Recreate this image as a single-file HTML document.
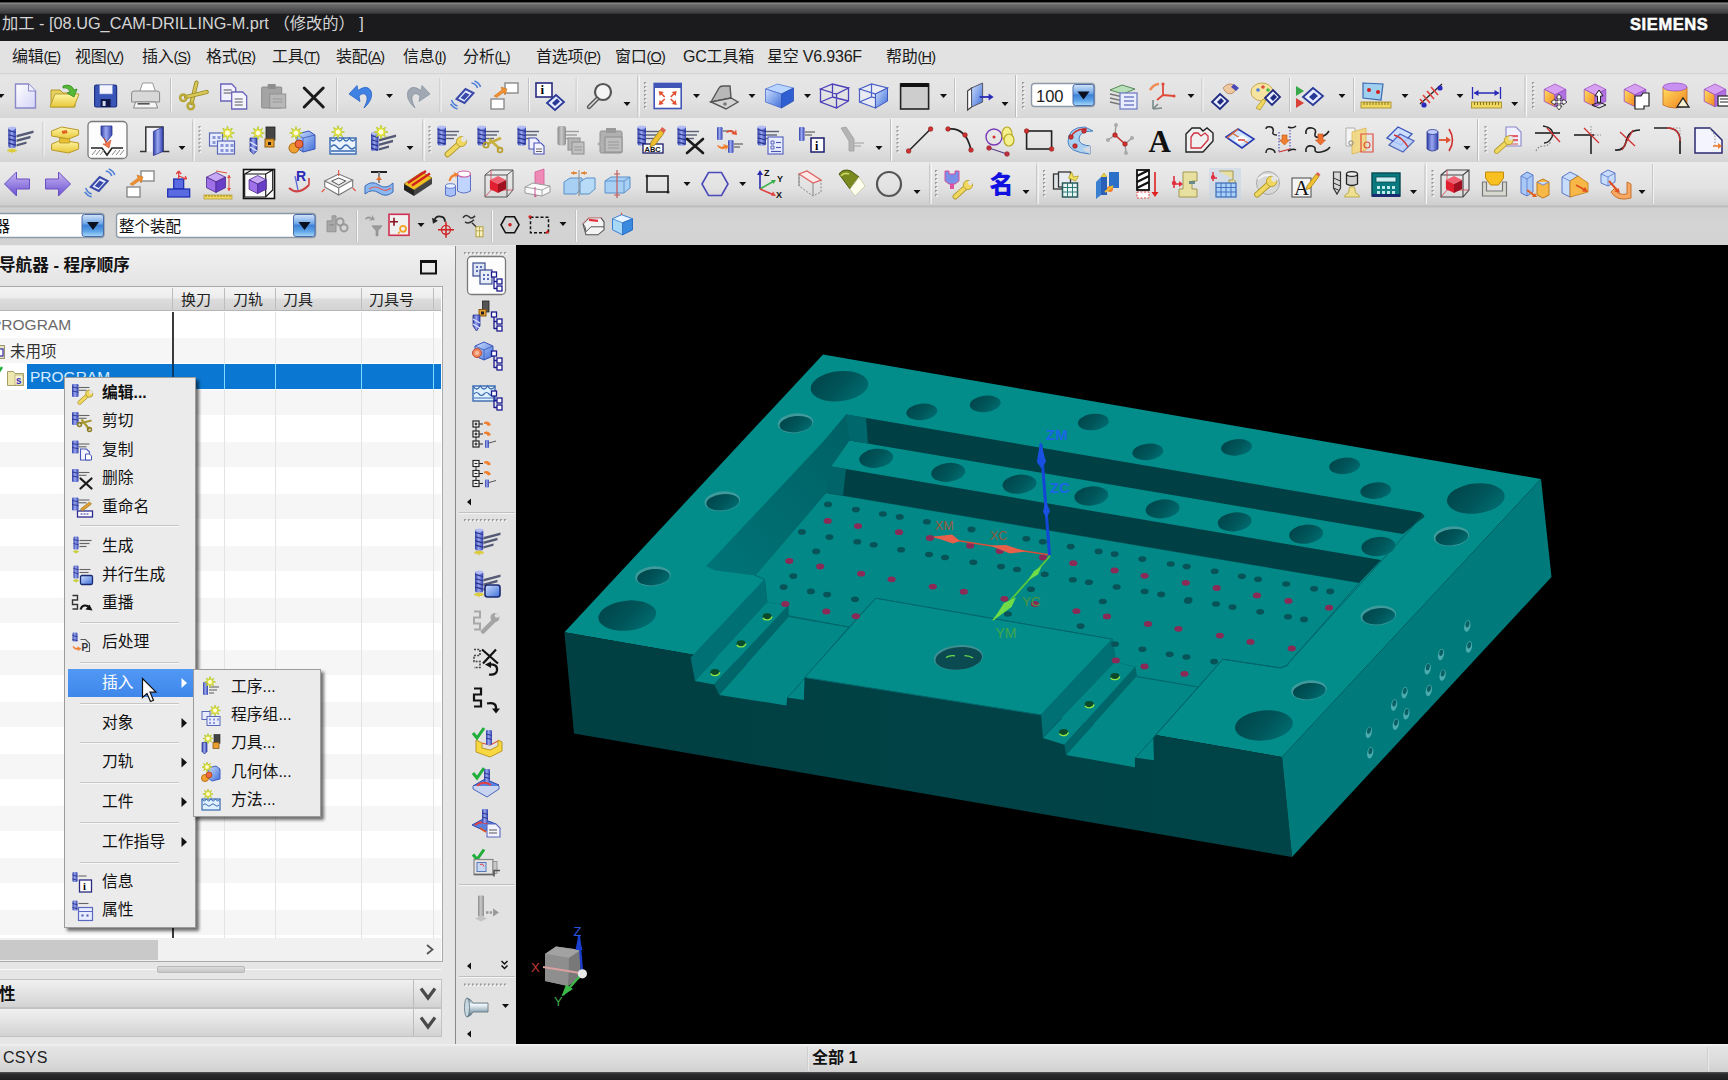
<!DOCTYPE html>
<html lang="zh-CN">
<head>
<meta charset="utf-8">
<title>NX 加工</title>
<style>
html,body{margin:0;padding:0;}
body{width:1728px;height:1080px;overflow:hidden;position:relative;background:#000;font-family:"Liberation Sans","Noto Sans CJK SC",sans-serif;font-size:16px;color:#111;}
.abs{position:absolute;}
div,span,svg{box-sizing:border-box;}
.t{position:absolute;white-space:nowrap;line-height:1;}
#topgrad{left:0;top:0;width:1728px;height:14px;background:linear-gradient(#000 0,#000 2px,#9a9a9a 3px,#6e6e6e 4px,#5a5a5c 8px,#3c3c3e 13px,#2a2a2c 14px);}
#title{left:0;top:14px;width:1728px;height:27px;background:#1b1b1e;}
#menubar{left:0;top:41px;width:1728px;height:32px;background:#e2e2e2;}
#tb1{left:0;top:73px;width:1728px;height:45px;background:linear-gradient(#cfcfcf 0,#e6e6e6 2px,#e2e2e2 60%,#d6d6d6 100%);}
#tb2{left:0;top:118px;width:1728px;height:44px;background:linear-gradient(#ebebeb 0,#e4e4e4 60%,#d4d4d4 100%);}
#tb3{left:0;top:162px;width:1728px;height:43px;background:linear-gradient(#ebebeb 0,#e2e2e2 60%,#cfcfcf 100%);}
#tb4{left:0;top:205px;width:1728px;height:40px;background:linear-gradient(#c8c8c8 0,#bcbcbc 1.5px,#d0d0d0 3px,#d4d4d4 50%,#d2d2d2 100%);}
#tb4line{left:0;top:245px;width:1728px;height:1px;background:#e8e8e8;}
.mi{position:absolute;top:48px;font-size:16px;line-height:18px;white-space:nowrap;color:#1a1a1a;letter-spacing:-0.2px;}
.mi u{text-decoration-thickness:1px;text-underline-offset:1px;}
.la{font-size:14.5px;letter-spacing:-0.9px;}
</style>
</head>
<body>
<div id="topgrad" class="abs"></div>
<div id="title" class="abs"></div>
<div class="t" style="left:2px;top:14px;font-size:16.3px;color:#d4d4d4;line-height:18px;">加工 - [08.UG_CAM-DRILLING-M.prt （修改的） ]</div>
<div class="t" style="left:1630px;top:14.5px;font-size:16.5px;font-weight:bold;color:#fff;line-height:18px;letter-spacing:0.6px;-webkit-text-stroke:0.5px #fff;">SIEMENS</div>
<div id="menubar" class="abs"></div>
<span class="mi" style="left:12px">编辑<span class="la">(<u>E</u>)</span></span>
<span class="mi" style="left:75px">视图<span class="la">(<u>V</u>)</span></span>
<span class="mi" style="left:142px">插入<span class="la">(<u>S</u>)</span></span>
<span class="mi" style="left:206px">格式<span class="la">(<u>R</u>)</span></span>
<span class="mi" style="left:272px">工具<span class="la">(<u>T</u>)</span></span>
<span class="mi" style="left:336px">装配<span class="la">(<u>A</u>)</span></span>
<span class="mi" style="left:403px">信息<span class="la">(<u>I</u>)</span></span>
<span class="mi" style="left:463px">分析<span class="la">(<u>L</u>)</span></span>
<span class="mi" style="left:536px">首选项<span class="la">(<u>P</u>)</span></span>
<span class="mi" style="left:615px">窗口<span class="la">(<u>O</u>)</span></span>
<span class="mi" style="left:683px">GC工具箱</span>
<span class="mi" style="left:767px">星空 V6.936F</span>
<span class="mi" style="left:886px">帮助<span class="la">(<u>H</u>)</span></span>
<div id="tb1" class="abs"></div>
<div id="tb2" class="abs"></div>
<div id="tb3" class="abs"></div>
<div id="tb4" class="abs"></div>
<div id="tb4line" class="abs"></div>
<svg class="abs" style="left:0;top:0" width="1728" height="250" viewBox="0 0 1728 250">
<defs>
<linearGradient id="gdr" x1="0" y1="0" x2="1" y2="0"><stop offset="0" stop-color="#2f3ea8"/><stop offset="0.45" stop-color="#9aa8f0"/><stop offset="1" stop-color="#3443b0"/></linearGradient>
<linearGradient id="gdg" x1="0" y1="0" x2="1" y2="0"><stop offset="0" stop-color="#8a8a8a"/><stop offset="0.45" stop-color="#c8c8c8"/><stop offset="1" stop-color="#8e8e8e"/></linearGradient>
<linearGradient id="gbl" x1="0" y1="0" x2="1" y2="1"><stop offset="0" stop-color="#cfe0ff"/><stop offset="1" stop-color="#3f6fd8"/></linearGradient>
<linearGradient id="gpu" x1="0" y1="0" x2="0" y2="1"><stop offset="0" stop-color="#c9b8f4"/><stop offset="1" stop-color="#6a4fd0"/></linearGradient>
<linearGradient id="gor" x1="0" y1="0" x2="1" y2="1"><stop offset="0" stop-color="#ffe060"/><stop offset="1" stop-color="#f08020"/></linearGradient>
<linearGradient id="gye" x1="0" y1="0" x2="0" y2="1"><stop offset="0" stop-color="#fff6a8"/><stop offset="1" stop-color="#e8c838"/></linearGradient>
<linearGradient id="gcb" x1="0" y1="0" x2="0" y2="1"><stop offset="0" stop-color="#d4e4f8"/><stop offset="0.4" stop-color="#74aae8"/><stop offset="0.5" stop-color="#3e82d8"/><stop offset="0.75" stop-color="#5ca2e6"/><stop offset="1" stop-color="#a8dafa"/></linearGradient>
<linearGradient id="gdoc" x1="0" y1="0" x2="1" y2="1"><stop offset="0" stop-color="#ffffff"/><stop offset="1" stop-color="#d4d4f8"/></linearGradient>
</defs>
<path d="M-2.5 94 h7 l-3.5 4z" fill="#111"/>
<g transform="translate(25.5 96)"><path d="M-10 -12 h13 l7 7 v17 h-20z" fill="url(#gdoc)" stroke="#8a88c8" stroke-width="1.4"/><path d="M3 -12 v7 h7" fill="#eef" stroke="#8a88c8" stroke-width="1"/></g>
<g transform="translate(65 96)"><path d="M-14 -6 h9 l3 3 h12 v14 h-24z" fill="#e8d060" stroke="#b09830" stroke-width="1"/><path d="M-15 11 l5 -13 h24 l-5 13z" fill="url(#gye)" stroke="#b8a030" stroke-width="1"/><path d="M-2 -10 q8 -3 11 4 l3 -1 l-3 8 l-7 -4 l3 -1 q-2 -5 -7 -4z" fill="#58b838" stroke="#2f8a20" stroke-width="0.8"/></g>
<g transform="translate(105.6 96)"><rect x="-11" y="-11" width="22" height="22" fill="#3a55b8" stroke="#1f2f80" stroke-width="1.2" rx="1.5"/><rect x="-6" y="-11" width="13" height="9" fill="#f4f4ff" stroke="#8090d0" stroke-width="0.6"/><rect x="-5" y="3" width="10" height="8" fill="#101848"/><rect x="-3" y="5" width="3" height="5" fill="#d0d8f0"/></g>
<g transform="translate(145.6 96)"><path d="M-6 -4 l3 -9 h10 l3 9z" fill="#fff" stroke="#999" stroke-width="1"/><path d="M-14 -3 q0 -2 3 -2 h22 q3 0 3 2 v9 h-28z" fill="#d8d8d8" stroke="#888" stroke-width="1"/><path d="M-10 6 h20 l2 6 h-24z" fill="#f4f4f4" stroke="#888" stroke-width="1"/><rect x="-8" y="7" width="12" height="1.6" fill="#555"/></g>
<rect x="170" y="78" width="1" height="34" fill="#c2c2c2"/><rect x="171" y="78" width="1" height="34" fill="#f6f6f6"/>
<g transform="translate(193 96)"><path d="M-1.5 7 L3.5 -13.4" fill="none" stroke="#9a8a28" stroke-width="4.2" stroke-linecap="round"/><path d="M-1.5 7 L3.5 -13.4" fill="none" stroke="#d8c858" stroke-width="2.4" stroke-linecap="round"/><path d="M-7 1 L13.7 -4" fill="none" stroke="#9a8a28" stroke-width="4.2" stroke-linecap="round"/><path d="M-7 1 L13.7 -4" fill="none" stroke="#d8c858" stroke-width="2.4" stroke-linecap="round"/><circle cx="-9.7" cy="1.8" r="3.2" fill="none" stroke="#b8a838" stroke-width="2.6"/><circle cx="-2.2" cy="10" r="3.2" fill="none" stroke="#b8a838" stroke-width="2.6"/></g>
<g transform="translate(233.7 96)"><path d="M-13 -12 h11 l4 4 v13 h-15z" fill="#f0f0ff" stroke="#6a64b8" stroke-width="1.3"/><line x1="-10" y1="-6" x2="-2" y2="-6" stroke="#555" stroke-width="1"/><line x1="-10" y1="-3" x2="-2" y2="-3" stroke="#555" stroke-width="1"/><path d="M-2 -4 h11 l4 4 v13 h-15z" fill="#f4f4ff" stroke="#6a64b8" stroke-width="1.3"/><line x1="1" y1="3" x2="9" y2="3" stroke="#555" stroke-width="1"/><line x1="1" y1="6" x2="9" y2="6" stroke="#555" stroke-width="1"/><line x1="1" y1="9" x2="9" y2="9" stroke="#555" stroke-width="1"/></g>
<g transform="translate(273.7 96)"><rect x="-12" y="-9" width="20" height="21" fill="#a4a4a4" stroke="#8a8a8a" stroke-width="1" rx="1"/><rect x="-6" y="-12" width="8" height="5" fill="#8e8e8e"/><rect x="-4" y="-2" width="16" height="14" fill="#b8b8b8" stroke="#909090" stroke-width="1"/><line x1="-1" y1="3" x2="9" y2="3" stroke="#999" stroke-width="1"/><line x1="-1" y1="6" x2="9" y2="6" stroke="#999" stroke-width="1"/></g>
<g transform="translate(313.7 96)"><path d="M-9.5 -8 L9.5 11 M9.5 -8 L-9.5 11" fill="none" stroke="#1a1a1a" stroke-width="3" stroke-linecap="round"/></g>
<rect x="336" y="78" width="1" height="34" fill="#c2c2c2"/><rect x="337" y="78" width="1" height="34" fill="#f6f6f6"/>
<g transform="translate(361 96)"><path d="M-12 -2 L-4 -10.5 L-3 -5.5 Q6 -12 10 -5 Q13 3 3 12 Q8 2 5 -1 Q2 -4 -2 0 L-1 5.5 Z" fill="#3f82e4" stroke="#2a62c4" stroke-width="0.8"/></g>
<path d="M386 94 h7 l-3.5 4z" fill="#111"/>
<g transform="translate(418 96)"><path d="M12 -2 L4 -10.5 L3 -5.5 Q-6 -12 -10 -5 Q-13 3 -3 12 Q-8 2 -5 -1 Q-2 -4 2 0 L1 5.5 Z" fill="#a0a8b4" stroke="#8c96a2" stroke-width="0.8"/></g>
<rect x="439.5" y="78" width="1" height="34" fill="#c2c2c2"/><rect x="440.5" y="78" width="1" height="34" fill="#f6f6f6"/>
<g transform="translate(464.5 96)"><path d="M-8 3 l9 -10 l8 4 l-9 10z" fill="#e8ecff" stroke="#3a4aa8" stroke-width="2"/><path d="M-4 2 l5 -5.5 l4 2 l-5 5.5z" fill="#3a4aa8"/><path d="M-13 4 q2 5 6 6 M-14 8 q3 4 7 5" fill="none" stroke="#4f80d8" stroke-width="1.6"/><path d="M7 -13 q5 1 6 5 M10 -15 q5 2 6 6" fill="none" stroke="#4f80d8" stroke-width="1.6"/></g>
<g transform="translate(504 96)"><rect x="1" y="-13" width="13" height="10" fill="#fff" stroke="#8a8a8a" stroke-width="1.4"/><rect x="-13" y="3" width="13" height="10" fill="#fff" stroke="#8a8a8a" stroke-width="1.4"/><path d="M-10 0 l8 -6 l-1 -3 l6 2 l-2 6 l-1.5 -2.5 l-7 5z" fill="#f09030" stroke="#c06818" stroke-width="0.5"/></g>
<rect x="528" y="78" width="1" height="34" fill="#c2c2c2"/><rect x="529" y="78" width="1" height="34" fill="#f6f6f6"/>
<g transform="translate(550 96)"><rect x="-14" y="-13" width="16" height="14" fill="#fff" stroke="#2a2a80" stroke-width="1.6"/><text x="-9.5" y="-2" font-size="13" fill="#000" font-weight="bold" font-family="Liberation Serif,serif">i</text><path d="M-3 7 l9 -8 l8 7 l-9 8z" fill="#e8ecff" stroke="#2a3a98" stroke-width="1.8"/><path d="M2 7 l5 -4.5 l3 3 l-5 4.5z" fill="#2a3a98"/></g>
<rect x="575.7" y="78" width="1" height="34" fill="#c2c2c2"/><rect x="576.7" y="78" width="1" height="34" fill="#f6f6f6"/>
<g transform="translate(600 96)"><circle cx="3" cy="-4" r="8" fill="#f4f4f4" stroke="#555" stroke-width="2.2"/><path d="M-3 3 L-11 11" fill="none" stroke="#555" stroke-width="4.4" stroke-linecap="round"/><path d="M-3 3 L-11 11" fill="none" stroke="#ddd" stroke-width="1.6" stroke-linecap="round"/></g>
<path d="M623.5 102 h7 l-3.5 4z" fill="#111"/>
<rect x="637.5" y="78" width="1" height="34" fill="#c2c2c2"/><rect x="638.5" y="78" width="1" height="34" fill="#f6f6f6"/>
<rect x="644" y="82" width="2.2" height="2.2" fill="#9c9c9c"/><rect x="645.2" y="83.2" width="1.6" height="1.6" fill="#fdfdfd"/><rect x="644" y="86" width="2.2" height="2.2" fill="#9c9c9c"/><rect x="645.2" y="87.2" width="1.6" height="1.6" fill="#fdfdfd"/><rect x="644" y="90" width="2.2" height="2.2" fill="#9c9c9c"/><rect x="645.2" y="91.2" width="1.6" height="1.6" fill="#fdfdfd"/><rect x="644" y="94" width="2.2" height="2.2" fill="#9c9c9c"/><rect x="645.2" y="95.2" width="1.6" height="1.6" fill="#fdfdfd"/><rect x="644" y="98" width="2.2" height="2.2" fill="#9c9c9c"/><rect x="645.2" y="99.2" width="1.6" height="1.6" fill="#fdfdfd"/><rect x="644" y="102" width="2.2" height="2.2" fill="#9c9c9c"/><rect x="645.2" y="103.2" width="1.6" height="1.6" fill="#fdfdfd"/><rect x="644" y="106" width="2.2" height="2.2" fill="#9c9c9c"/><rect x="645.2" y="107.2" width="1.6" height="1.6" fill="#fdfdfd"/>
<g transform="translate(667.7 96)"><rect x="-13.5" y="-12.5" width="27" height="25" fill="#fff" stroke="#3f55b8" stroke-width="1.6"/><rect x="-13.5" y="-12.5" width="27" height="4.5" fill="#3f55b8"/><path d="M-9 -5 l5 1 l-4 4z M9 -5 l-5 1 l4 4z M-9 9 l5 -1 l-4 -4z M9 9 l-5 -1 l4 -4z" fill="#e05030"/><path d="M-7 -3 L-3 1 M7 -3 L3 1 M-7 7 L-3 3 M7 7 L3 3" fill="none" stroke="#e05030" stroke-width="1.6"/></g>
<path d="M693 94 h7 l-3.5 4z" fill="#111"/>
<g transform="translate(724 96)"><path d="M-13 6 l8 -14 q1 -2 4 -2 h7 l1 12z" fill="#b8b8b8" stroke="#555" stroke-width="1.4"/><path d="M-13 6 l20 -4 l7 4 l-12 7z" fill="#d4d4d4" stroke="#555" stroke-width="1.4"/><circle cx="1" cy="8" r="1.8" fill="#777"/></g>
<path d="M748.5 94 h7 l-3.5 4z" fill="#111"/>
<g transform="translate(779.5 96)"><path d="M-14 -7 L-2 -12 L14 -8 L2 -2z" fill="#b8d4ff" stroke="#5a80d8" stroke-width="0.8"/><path d="M-14 -7 L2 -2 L2 12 L-14 6z" fill="url(#gbl)" stroke="#4a6ad0" stroke-width="0.8"/><path d="M2 -2 L14 -8 L14 5 L2 12z" fill="#2f5fd0" stroke="#2a50b8" stroke-width="0.8"/></g>
<path d="M804 94 h7 l-3.5 4z" fill="#111"/>
<g transform="translate(834.5 96)"><path d="M-14 -7 L-2 -12 L14 -8 L2 -2z M-14 -7 L2 -2 L2 12 L-14 6z M2 -2 L14 -8 L14 5 L2 12 M-2 -12 V1 M-14 6 L-2 1 L14 5" fill="none" stroke="#4a3fb8" stroke-width="1.3"/></g>
<g transform="translate(873.5 96)"><path d="M-14 -7 L-2 -12 L14 -8 L2 -2z M-14 -7 L2 -2 L2 12 L-14 6z M-2 -12 V1 M-14 6 L-2 1 L14 5" fill="#eef2ff" stroke="#4a5fc8" stroke-width="1.2" fill-opacity="0.6"/><path d="M2 -2 L14 -8 L14 5 L2 12z" fill="url(#gbl)" stroke="#3f55c0" stroke-width="1"/></g>
<g transform="translate(914.6 96)"><rect x="-14" y="-12" width="28" height="25" fill="#cdcdcd" stroke="#222" stroke-width="1.6"/><rect x="-14" y="-13" width="28" height="4" fill="#111"/></g>
<path d="M940 94 h7 l-3.5 4z" fill="#111"/>
<rect x="954" y="78" width="1" height="34" fill="#c2c2c2"/><rect x="955" y="78" width="1" height="34" fill="#f6f6f6"/>
<g transform="translate(979.6 96)"><path d="M-12 -5 l4 -3 v19 l-4 3z" fill="#fff" stroke="#444" stroke-width="1.2"/><path d="M-8 -8 l11 -5 v19 l-11 5z" fill="url(#gbl)" stroke="#556" stroke-width="1"/><line x1="0" y1="1" x2="12" y2="1" stroke="#2a2ab8" stroke-width="1.8"/><path d="M9 -2.5 l5 3.5 l-5 3.5z" fill="#2a2ab8"/></g>
<path d="M1001.5 102 h7 l-3.5 4z" fill="#111"/>
<rect x="1015" y="78" width="1" height="34" fill="#c2c2c2"/><rect x="1016" y="78" width="1" height="34" fill="#f6f6f6"/>
<rect x="1022" y="82" width="2.2" height="2.2" fill="#9c9c9c"/><rect x="1023.2" y="83.2" width="1.6" height="1.6" fill="#fdfdfd"/><rect x="1022" y="86" width="2.2" height="2.2" fill="#9c9c9c"/><rect x="1023.2" y="87.2" width="1.6" height="1.6" fill="#fdfdfd"/><rect x="1022" y="90" width="2.2" height="2.2" fill="#9c9c9c"/><rect x="1023.2" y="91.2" width="1.6" height="1.6" fill="#fdfdfd"/><rect x="1022" y="94" width="2.2" height="2.2" fill="#9c9c9c"/><rect x="1023.2" y="95.2" width="1.6" height="1.6" fill="#fdfdfd"/><rect x="1022" y="98" width="2.2" height="2.2" fill="#9c9c9c"/><rect x="1023.2" y="99.2" width="1.6" height="1.6" fill="#fdfdfd"/><rect x="1022" y="102" width="2.2" height="2.2" fill="#9c9c9c"/><rect x="1023.2" y="103.2" width="1.6" height="1.6" fill="#fdfdfd"/><rect x="1022" y="106" width="2.2" height="2.2" fill="#9c9c9c"/><rect x="1023.2" y="107.2" width="1.6" height="1.6" fill="#fdfdfd"/>
<rect x="1031.5" y="83.5" width="63" height="23" rx="3" fill="#fff" stroke="#8e9aa8" stroke-width="1.4"/>
<rect x="1073" y="84.5" width="21" height="21" rx="2.5" fill="url(#gcb)" stroke="#4a6aa8" stroke-width="1"/>
<path d="M1077.5 91.5 h12 l-6 8z" fill="#0a1020"/>
<text x="1036" y="102" font-size="16.5" fill="#222" font-weight="normal" font-family="Liberation Sans,sans-serif">100</text>
<g transform="translate(1123 96)"><path d="M-13 -6 l12 -5 l13 4 l-12 5z" fill="#b8e0b8" stroke="#5a8a5a" stroke-width="1"/><path d="M-13 -2 l13 3 l12 -4 M-13 2 l13 3 l12 -4 M-13 6 l13 3 l12 -4" fill="none" stroke="#777" stroke-width="1.3"/><rect x="-3" y="-3" width="17" height="16" fill="#e8ecff" stroke="#6a78c0" stroke-width="1.2"/><line x1="1" y1="1" x2="11" y2="1" stroke="#6a78c0" stroke-width="1.4"/><line x1="1" y1="5" x2="11" y2="5" stroke="#6a78c0" stroke-width="1.4"/><line x1="1" y1="9" x2="11" y2="9" stroke="#6a78c0" stroke-width="1.4"/></g>
<g transform="translate(1162 96)"><path d="M1 -1 v-11 M1 -1 l11 1 M1 -1 l-6 5" fill="none" stroke="#e04a3a" stroke-width="1.8"/><circle cx="1" cy="-12" r="1.6" fill="#e04a3a"/><circle cx="12" cy="0" r="1.6" fill="#e04a3a"/><path d="M-12 -6 q4 -6 9 -6" fill="none" stroke="#f08a50" stroke-width="2.6"/><path d="M-9 4 v9 M-9 13 l9 -1 M-9 13 l5 -5" fill="none" stroke="#7a8a8a" stroke-width="1.6"/></g>
<path d="M1187.5 94 h7 l-3.5 4z" fill="#111"/>
<rect x="1201.5" y="78" width="1" height="34" fill="#c2c2c2"/><rect x="1202.5" y="78" width="1" height="34" fill="#f6f6f6"/>
<g transform="translate(1225 96)"><path d="M-2 -8 q5 -6 11 -3 l4 3 l-5 5 q-6 3 -10 -5z" fill="#f0c8a0" stroke="#b08060" stroke-width="0.8"/><path d="M9 -12 l5 4 l-3 3 l-5 -4z" fill="#4a4ab8"/><path d="M-13 6 l8 -8 l8 7 l-8 8z" fill="#e8ecff" stroke="#1f2a80" stroke-width="1.8"/><path d="M-8 6 l4 -4 l3 3 l-4 4z" fill="#1f2a80"/></g>
<g transform="translate(1265 96)"><ellipse cx="-3" cy="-4" rx="11" ry="9" fill="#f4e4a0" stroke="#c8a850" stroke-width="1"/><circle cx="-7" cy="-6" r="1.8" fill="#4a7ae0"/><circle cx="-2" cy="-9" r="1.8" fill="#e04a3a"/><circle cx="3" cy="-6" r="1.8" fill="#4ab84a"/><path d="M-9 12 l7 -9 l3 2 l-6 9z" fill="#f0d860" stroke="#b09a30" stroke-width="0.8"/><path d="M0 2 l8 -8 l7 7 l-8 8z" fill="#e8ecff" stroke="#1f2a80" stroke-width="1.8"/><path d="M5 2 l4 -4 l3 3 l-4 4z" fill="#1f2a80"/></g>
<rect x="1289" y="78" width="1" height="34" fill="#c2c2c2"/><rect x="1290" y="78" width="1" height="34" fill="#f6f6f6"/>
<g transform="translate(1311 96)"><path d="M-15 -10 l8 5 l-8 5z" fill="#38a848"/><path d="M-15 2 l8 5 l-8 5z" fill="#d84038"/><path d="M-8 1 l10 -9 l10 8 l-10 9z" fill="#e8ecff" stroke="#2a3a98" stroke-width="1.8"/><path d="M-2 1 l5 -4.5 l4 3.5 l-5 4.5z" fill="#2a3a98"/></g>
<path d="M1338.5 94 h7 l-3.5 4z" fill="#111"/>
<rect x="1353" y="78" width="1" height="34" fill="#c2c2c2"/><rect x="1354" y="78" width="1" height="34" fill="#f6f6f6"/>
<g transform="translate(1376 96)"><path d="M-13 -13 l20 1 l-2 16 l-18 -2z" fill="#9fd0f0" stroke="#3a6ab0" stroke-width="1.2"/><circle cx="-7" cy="-6" r="2" fill="#d02020"/><circle cx="2" cy="-4" r="2" fill="#d02020"/><rect x="-15" y="6" width="30" height="6" fill="#f0d860" stroke="#a89030" stroke-width="0.9"/><line x1="-12" y1="6" x2="-12" y2="9" stroke="#6a5a10" stroke-width="0.8"/><line x1="-9" y1="6" x2="-9" y2="9" stroke="#6a5a10" stroke-width="0.8"/><line x1="-6" y1="6" x2="-6" y2="9" stroke="#6a5a10" stroke-width="0.8"/><line x1="-3" y1="6" x2="-3" y2="9" stroke="#6a5a10" stroke-width="0.8"/><line x1="0" y1="6" x2="0" y2="9" stroke="#6a5a10" stroke-width="0.8"/><line x1="3" y1="6" x2="3" y2="9" stroke="#6a5a10" stroke-width="0.8"/><line x1="6" y1="6" x2="6" y2="9" stroke="#6a5a10" stroke-width="0.8"/><line x1="9" y1="6" x2="9" y2="9" stroke="#6a5a10" stroke-width="0.8"/><line x1="12" y1="6" x2="12" y2="9" stroke="#6a5a10" stroke-width="0.8"/></g>
<path d="M1401.5 94 h7 l-3.5 4z" fill="#111"/>
<g transform="translate(1431 96)"><path d="M-11 8 L11 -12" fill="none" stroke="#222" stroke-width="1.2"/><path d="M-8 -1 l7 8 M-4 -5 l7 8 M0 -9 l7 8 M-11 3 l6 7" fill="none" stroke="#e04040" stroke-width="1.6"/><circle cx="-7" cy="9" r="2.6" fill="#2a2ac0"/><circle cx="9" cy="-8" r="2.6" fill="#2a2ac0"/></g>
<path d="M1456.5 94 h7 l-3.5 4z" fill="#111"/>
<g transform="translate(1486.5 96)"><line x1="-14" y1="-9" x2="-14" y2="3" stroke="#2a2ab8" stroke-width="1.3"/><line x1="14" y1="-9" x2="14" y2="3" stroke="#2a2ab8" stroke-width="1.3"/><line x1="-12" y1="-3" x2="12" y2="-3" stroke="#2a2ab8" stroke-width="1.5"/><path d="M-13 -3 l5 -3 v6z M13 -3 l-5 -3 v6z" fill="#2a2ab8"/><rect x="-15" y="6" width="30" height="6" fill="#f0d860" stroke="#a89030" stroke-width="0.9"/><line x1="-12" y1="6" x2="-12" y2="9" stroke="#6a5a10" stroke-width="0.8"/><line x1="-9" y1="6" x2="-9" y2="9" stroke="#6a5a10" stroke-width="0.8"/><line x1="-6" y1="6" x2="-6" y2="9" stroke="#6a5a10" stroke-width="0.8"/><line x1="-3" y1="6" x2="-3" y2="9" stroke="#6a5a10" stroke-width="0.8"/><line x1="0" y1="6" x2="0" y2="9" stroke="#6a5a10" stroke-width="0.8"/><line x1="3" y1="6" x2="3" y2="9" stroke="#6a5a10" stroke-width="0.8"/><line x1="6" y1="6" x2="6" y2="9" stroke="#6a5a10" stroke-width="0.8"/><line x1="9" y1="6" x2="9" y2="9" stroke="#6a5a10" stroke-width="0.8"/><line x1="12" y1="6" x2="12" y2="9" stroke="#6a5a10" stroke-width="0.8"/></g>
<path d="M1511.2 102 h7 l-3.5 4z" fill="#111"/>
<rect x="1524.7" y="78" width="1" height="34" fill="#c2c2c2"/><rect x="1525.7" y="78" width="1" height="34" fill="#f6f6f6"/>
<rect x="1532" y="82" width="2.2" height="2.2" fill="#9c9c9c"/><rect x="1533.2" y="83.2" width="1.6" height="1.6" fill="#fdfdfd"/><rect x="1532" y="86" width="2.2" height="2.2" fill="#9c9c9c"/><rect x="1533.2" y="87.2" width="1.6" height="1.6" fill="#fdfdfd"/><rect x="1532" y="90" width="2.2" height="2.2" fill="#9c9c9c"/><rect x="1533.2" y="91.2" width="1.6" height="1.6" fill="#fdfdfd"/><rect x="1532" y="94" width="2.2" height="2.2" fill="#9c9c9c"/><rect x="1533.2" y="95.2" width="1.6" height="1.6" fill="#fdfdfd"/><rect x="1532" y="98" width="2.2" height="2.2" fill="#9c9c9c"/><rect x="1533.2" y="99.2" width="1.6" height="1.6" fill="#fdfdfd"/><rect x="1532" y="102" width="2.2" height="2.2" fill="#9c9c9c"/><rect x="1533.2" y="103.2" width="1.6" height="1.6" fill="#fdfdfd"/><rect x="1532" y="106" width="2.2" height="2.2" fill="#9c9c9c"/><rect x="1533.2" y="107.2" width="1.6" height="1.6" fill="#fdfdfd"/>
<g transform="translate(1555 96)"><path d="M0 -12 l10.8 5.4 l-10.8 5.4 l-10.8 -5.4 z" fill="#d8a0f0" stroke="#9a50c8" stroke-width="0.8"/><path d="M-10.8 -6.6 l10.8 5.4 l0 12 l-10.8 -5.4 z" fill="url(#gor)" stroke="#9a50c8" stroke-width="0.8"/><path d="M0 -1.2 l10.8 -5.4 l0 12 l-10.8 5.4 z" fill="#b070e0" stroke="#9a50c8" stroke-width="0.8"/><path d="M4 -2 l3 4 h-2 v3 h3 v-2 l4 3 l-4 3 v-2 h-3 v3 h2 l-3 4 l-3 -4 h2 v-3 h-3 v2 l-4 -3 l4 -3 v2 h3 v-3 h-2z" fill="#fff" stroke="#333" stroke-width="0.9"/></g>
<g transform="translate(1595 96)"><path d="M0 -12 l10.8 5.4 l-10.8 5.4 l-10.8 -5.4 z" fill="#d8a0f0" stroke="#9a50c8" stroke-width="0.8"/><path d="M-10.8 -6.6 l10.8 5.4 l0 12 l-10.8 -5.4 z" fill="url(#gor)" stroke="#9a50c8" stroke-width="0.8"/><path d="M0 -1.2 l10.8 -5.4 l0 12 l-10.8 5.4 z" fill="#b070e0" stroke="#9a50c8" stroke-width="0.8"/><path d="M4 -6 l4 6 h-2.5 v7 h-3 v-7 h-2.5z" fill="#fff" stroke="#222" stroke-width="1"/><path d="M-3 9 l7 -3 l7 3 l-7 3z" fill="none" stroke="#222" stroke-width="1"/></g>
<g transform="translate(1635 96)"><path d="M0 -12 l10.8 5.4 l-10.8 5.4 l-10.8 -5.4 z" fill="#d8a0f0" stroke="#9a50c8" stroke-width="0.8"/><path d="M-10.8 -6.6 l10.8 5.4 l0 12 l-10.8 -5.4 z" fill="url(#gor)" stroke="#9a50c8" stroke-width="0.8"/><path d="M0 -1.2 l10.8 -5.4 l0 12 l-10.8 5.4 z" fill="#b070e0" stroke="#9a50c8" stroke-width="0.8"/><path d="M0 0 h6 l2 -3 h6 v13 h-5 v3 h-9z" fill="#fff" stroke="#222" stroke-width="1.2"/></g>
<g transform="translate(1675 96)"><path d="M-12 -9 v18 q12 6 24 0 v-18z" fill="url(#gor)" stroke="#c06a20" stroke-width="0.8"/><ellipse cx="0" cy="-9" rx="12" ry="4" fill="#c890f0" stroke="#9a50c8" stroke-width="0.8"/><path d="M2 11 l6 -9 l6 9z" fill="#f8f0d0" stroke="#222" stroke-width="1.3"/></g>
<g transform="translate(1715 96)"><path d="M0 -12 l10.8 5.4 l-10.8 5.4 l-10.8 -5.4 z" fill="#d8a0f0" stroke="#9a50c8" stroke-width="0.8"/><path d="M-10.8 -6.6 l10.8 5.4 l0 12 l-10.8 -5.4 z" fill="url(#gor)" stroke="#9a50c8" stroke-width="0.8"/><path d="M0 -1.2 l10.8 -5.4 l0 12 l-10.8 5.4 z" fill="#b070e0" stroke="#9a50c8" stroke-width="0.8"/><rect x="3" y="0" width="12" height="10" fill="#fff" stroke="#222" stroke-width="1.2"/><path d="M5 3 h8 M5 6 h8" fill="none" stroke="#222" stroke-width="1"/></g>
<g transform="translate(19 140)"><rect x="-10.7" y="-13" width="7.6" height="21" fill="url(#gdr)" rx="2.2"/><line x1="-10.4" y1="-9.5" x2="-3.4" y2="-7.5" stroke="#26318a" stroke-width="1.1"/><line x1="-10.4" y1="-5.3" x2="-3.4" y2="-3.3" stroke="#26318a" stroke-width="1.1"/><line x1="-10.4" y1="-1.1" x2="-3.4" y2="0.9" stroke="#26318a" stroke-width="1.1"/><line x1="-10.4" y1="3.1" x2="-3.4" y2="5.1" stroke="#26318a" stroke-width="1.1"/><ellipse cx="-6.9" cy="-11.8" rx="3.5" ry="1.6" fill="#b4bef4"/><path d="M-2.5 -5 l17 -4.5 v2.4 l-17 4.5z M-2.5 -0.4 l14 -3.8 v2.4 l-14 3.8z M-2.5 4.2 l10 -2.8 v2.4 l-10 2.8z" fill="#555a74"/><path d="M-12 10.5 l5 -1.5 l5 1.5 l-5 1.5z M-7 8.5 v5 M-10.5 9 l7 3 M-3.5 9 l-7 3" fill="#e8d848" stroke="#d8c838" stroke-width="0.8"/></g>
<rect x="42.5" y="122" width="1" height="34" fill="#c2c2c2"/><rect x="43.5" y="122" width="1" height="34" fill="#f6f6f6"/>
<g transform="translate(65.6 140)"><path d="M-14 4 l10 -4 l17 3 v6 l-10 4 l-17 -3z" fill="url(#gye)" stroke="#b89828" stroke-width="1"/><path d="M-6 -2 h10 v5 h-10z" fill="#e8c030" stroke="#b89828" stroke-width="0.8"/><path d="M-14 -9 l10 -4 l17 3 v5 l-10 4 l-17 -3z" fill="url(#gye)" stroke="#b89828" stroke-width="1"/><path d="M-4 -9 l5 -1 l1 3 l-5 1z" fill="#e06020"/></g>
<rect x="88" y="121.5" width="39" height="37" rx="4" fill="#fcfcfc" stroke="#7a7a7a" stroke-width="1.3"/>
<g transform="translate(107 140)"><path d="M-6 -14 h11 v9 l-5.5 7 l-5.5 -7z" fill="url(#gdr)" stroke="#2a3590" stroke-width="0.8"/><path d="M-16 8 h11 l5 7 l5 -7 h11" fill="none" stroke="#222" stroke-width="1.6"/><path d="M-3 -2 l3 5 l4 -3 l-2 8 l-6 -4 l3 0z" fill="#f07850" stroke="#d04020" stroke-width="0.6"/><line x1="-15" y1="15" x2="-11" y2="10" stroke="#888" stroke-width="1"/><line x1="-11" y1="15" x2="-7" y2="10" stroke="#888" stroke-width="1"/><line x1="-7" y1="15" x2="-3" y2="10" stroke="#888" stroke-width="1"/><line x1="5" y1="15" x2="9" y2="10" stroke="#888" stroke-width="1"/><line x1="9" y1="15" x2="13" y2="10" stroke="#888" stroke-width="1"/><line x1="13" y1="15" x2="17" y2="10" stroke="#888" stroke-width="1"/></g>
<g transform="translate(155 140)"><rect x="-9.2" y="-13" width="17.2" height="24.4" fill="#f4f4f8"/><path d="M-15 11.4 h5.8 v-24.4 h17.2 v24.4 h6.3" fill="none" stroke="#333" stroke-width="1.5"/><path d="M8 -13 L-1.6 -8.6 L-1.6 15.5 L8 11.4z" fill="url(#gdr)" stroke="#2a3590" stroke-width="0.8"/></g>
<path d="M178.5 146 h7 l-3.5 4z" fill="#111"/>
<rect x="192.5" y="122" width="1" height="34" fill="#c2c2c2"/><rect x="193.5" y="122" width="1" height="34" fill="#f6f6f6"/>
<rect x="198.5" y="126" width="2.2" height="2.2" fill="#9c9c9c"/><rect x="199.7" y="127.2" width="1.6" height="1.6" fill="#fdfdfd"/><rect x="198.5" y="130" width="2.2" height="2.2" fill="#9c9c9c"/><rect x="199.7" y="131.2" width="1.6" height="1.6" fill="#fdfdfd"/><rect x="198.5" y="134" width="2.2" height="2.2" fill="#9c9c9c"/><rect x="199.7" y="135.2" width="1.6" height="1.6" fill="#fdfdfd"/><rect x="198.5" y="138" width="2.2" height="2.2" fill="#9c9c9c"/><rect x="199.7" y="139.2" width="1.6" height="1.6" fill="#fdfdfd"/><rect x="198.5" y="142" width="2.2" height="2.2" fill="#9c9c9c"/><rect x="199.7" y="143.2" width="1.6" height="1.6" fill="#fdfdfd"/><rect x="198.5" y="146" width="2.2" height="2.2" fill="#9c9c9c"/><rect x="199.7" y="147.2" width="1.6" height="1.6" fill="#fdfdfd"/><rect x="198.5" y="150" width="2.2" height="2.2" fill="#9c9c9c"/><rect x="199.7" y="151.2" width="1.6" height="1.6" fill="#fdfdfd"/>
<g transform="translate(222.5 140)"><rect x="-13" y="-7" width="13" height="13" fill="#e8ecff" stroke="#5a68b8" stroke-width="1.2"/><path d="M-10 -4 h3 v3 h-3z M-5 -4 h3 v3 h-3z M-10 1 h3 v3 h-3z M-5 1 h3 v3 h-3z" fill="#8a96d8"/><rect x="-5" y="1" width="17" height="13" fill="#e8ecff" stroke="#5a68b8" stroke-width="1.2"/><path d="M-2 4 h3 v3 h-3z M3 4 h3 v3 h-3z M8 4 h3 v3 h-3z M-2 9 h3 v3 h-3z M3 9 h3 v3 h-3z M8 9 h3 v3 h-3z" fill="#8a96d8"/><polygon points="12,-7 7.9,-5.8 9.9,-2.1 6.2,-4.1 5,0 3.8,-4.1 0.1,-2.1 2.1,-5.8 -2,-7 2.1,-8.2 0.1,-11.9 3.8,-9.9 5,-14 6.2,-9.9 9.9,-11.9 7.9,-8.2" fill="#f8ec40" stroke="#b4c830" stroke-width="0.8"/><circle cx="5" cy="-7" r="2.4" fill="#fffbe0"/></g>
<g transform="translate(263 140)"><path d="M-13 -2 h7 v13 l-3.5 3 l-3.5 -3z" fill="url(#gdr)" stroke="#2a3590" stroke-width="0.8"/><line x1="-13" y1="2" x2="-6" y2="6" stroke="#dfe4ff" stroke-width="1.4"/><line x1="-13" y1="7" x2="-6" y2="11" stroke="#dfe4ff" stroke-width="1.4"/><rect x="3" y="-13" width="9" height="13" fill="#444" stroke="#222" stroke-width="0.8"/><rect x="2" y="-1" width="9" height="8" fill="#e8a030" stroke="#8a5a10" stroke-width="1"/><rect x="5" y="2" width="3" height="3" fill="#222"/><polygon points="1.5,-7 -2.3,-5.9 -0.4,-2.4 -3.9,-4.3 -5,-0.5 -6.1,-4.3 -9.6,-2.4 -7.7,-5.9 -11.5,-7 -7.7,-8.1 -9.6,-11.6 -6.1,-9.7 -5,-13.5 -3.9,-9.7 -0.4,-11.6 -2.3,-8.1" fill="#f8ec40" stroke="#b4c830" stroke-width="0.8"/><circle cx="-5" cy="-7" r="2.3" fill="#fffbe0"/></g>
<g transform="translate(302 140)"><path d="M-5 -6 l12 -3 l6 4 v14 l-12 3 l-6 -4z" fill="url(#gbl)" stroke="#3a55b8" stroke-width="1"/><path d="M-5 -6 l6 4 l12 -3 M1 -2 v14" fill="none" stroke="#3a55b8" stroke-width="0.8"/><circle cx="-8" cy="8" r="5" fill="#f0a030" stroke="#b06a10" stroke-width="1"/><circle cx="-3" cy="4" r="4" fill="#f06a40" stroke="#b04010" stroke-width="1"/><polygon points="0.5,-7 -3.3,-5.9 -1.4,-2.4 -4.9,-4.3 -6,-0.5 -7.1,-4.3 -10.6,-2.4 -8.7,-5.9 -12.5,-7 -8.7,-8.1 -10.6,-11.6 -7.1,-9.7 -6,-13.5 -4.9,-9.7 -1.4,-11.6 -3.3,-8.1" fill="#f8ec40" stroke="#b4c830" stroke-width="0.8"/><circle cx="-6" cy="-7" r="2.3" fill="#fffbe0"/></g>
<g transform="translate(343 140)"><rect x="-13" y="-2" width="26" height="16" fill="#eaf4ff" stroke="#3a6ab0" stroke-width="1.4"/><path d="M-13 -2 q3 6 6.5 0 q3 6 6.5 0 q3 6 6.5 0 q3 6 6.5 0" fill="none" stroke="#3a6ab0" stroke-width="1.3"/><path d="M-12 7 q3 -4 6 0 q3 4 6 0 q3 -4 6 0 q3 4 6 0 M-12 11 h24" fill="none" stroke="#3a6ab0" stroke-width="1.3"/><polygon points="1.5,-8 -2.3,-6.9 -0.4,-3.4 -3.9,-5.3 -5,-1.5 -6.1,-5.3 -9.6,-3.4 -7.7,-6.9 -11.5,-8 -7.7,-9.1 -9.6,-12.6 -6.1,-10.7 -5,-14.5 -3.9,-10.7 -0.4,-12.6 -2.3,-9.1" fill="#f8ec40" stroke="#b4c830" stroke-width="0.8"/><circle cx="-5" cy="-8" r="2.3" fill="#fffbe0"/></g>
<g transform="translate(383 140)"><rect x="-12" y="-8" width="7.5" height="19" fill="url(#gdr)" rx="2.2"/><line x1="-11.7" y1="-4.5" x2="-4.8" y2="-2.5" stroke="#26318a" stroke-width="1.1"/><line x1="-11.7" y1="-0.3" x2="-4.8" y2="1.7" stroke="#26318a" stroke-width="1.1"/><line x1="-11.7" y1="3.9" x2="-4.8" y2="5.9" stroke="#26318a" stroke-width="1.1"/><line x1="-11.7" y1="8.1" x2="-4.8" y2="10.1" stroke="#26318a" stroke-width="1.1"/><ellipse cx="-8.2" cy="-6.8" rx="3.5" ry="1.6" fill="#b4bef4"/><path d="M-4 -1 l17 -4.5 v2.4 l-17 4.5z M-4 3.6 l14 -3.8 v2.4 l-14 3.8z M-4 8.2 l10 -2.8 v2.4 l-10 2.8z" fill="#555a74"/><polygon points="5,-8 0.9,-6.8 2.9,-3.1 -0.8,-5.1 -2,-1 -3.2,-5.1 -6.9,-3.1 -4.9,-6.8 -9,-8 -4.9,-9.2 -6.9,-12.9 -3.2,-10.9 -2,-15 -0.8,-10.9 2.9,-12.9 0.9,-9.2" fill="#f8ec40" stroke="#b4c830" stroke-width="0.8"/><circle cx="-2" cy="-8" r="2.4" fill="#fffbe0"/></g>
<path d="M406.5 146 h7 l-3.5 4z" fill="#111"/>
<rect x="422.5" y="122" width="1" height="34" fill="#c2c2c2"/><rect x="423.5" y="122" width="1" height="34" fill="#f6f6f6"/>
<rect x="428.5" y="126" width="2.2" height="2.2" fill="#9c9c9c"/><rect x="429.7" y="127.2" width="1.6" height="1.6" fill="#fdfdfd"/><rect x="428.5" y="130" width="2.2" height="2.2" fill="#9c9c9c"/><rect x="429.7" y="131.2" width="1.6" height="1.6" fill="#fdfdfd"/><rect x="428.5" y="134" width="2.2" height="2.2" fill="#9c9c9c"/><rect x="429.7" y="135.2" width="1.6" height="1.6" fill="#fdfdfd"/><rect x="428.5" y="138" width="2.2" height="2.2" fill="#9c9c9c"/><rect x="429.7" y="139.2" width="1.6" height="1.6" fill="#fdfdfd"/><rect x="428.5" y="142" width="2.2" height="2.2" fill="#9c9c9c"/><rect x="429.7" y="143.2" width="1.6" height="1.6" fill="#fdfdfd"/><rect x="428.5" y="146" width="2.2" height="2.2" fill="#9c9c9c"/><rect x="429.7" y="147.2" width="1.6" height="1.6" fill="#fdfdfd"/><rect x="428.5" y="150" width="2.2" height="2.2" fill="#9c9c9c"/><rect x="429.7" y="151.2" width="1.6" height="1.6" fill="#fdfdfd"/>
<g transform="translate(451 140)"><rect x="-13.5" y="-14" width="8.5" height="19.5" fill="url(#gdr)" rx="2.2"/><line x1="-13.2" y1="-10.5" x2="-5.3" y2="-8.5" stroke="#26318a" stroke-width="1.1"/><line x1="-13.2" y1="-6.3" x2="-5.3" y2="-4.3" stroke="#26318a" stroke-width="1.1"/><line x1="-13.2" y1="-2.1" x2="-5.3" y2="-0.1" stroke="#26318a" stroke-width="1.1"/><line x1="-13.2" y1="2.1" x2="-5.3" y2="4.1" stroke="#26318a" stroke-width="1.1"/><ellipse cx="-9.2" cy="-12.8" rx="4" ry="1.6" fill="#b4bef4"/><line x1="-5" y1="-8.5" x2="8" y2="-8.5" stroke="#5a6078" stroke-width="1.4"/><line x1="-5" y1="-5" x2="6" y2="-5" stroke="#5a6078" stroke-width="1.4"/><line x1="-5" y1="-1.5" x2="3" y2="-1.5" stroke="#5a6078" stroke-width="1.4"/><path d="M-3.4 14.2 L8.6 3.4" fill="none" stroke="#b09a30" stroke-width="6" stroke-linecap="round"/><path d="M-3.4 14.2 L8.6 3.4" fill="none" stroke="#f0d860" stroke-width="4.1" stroke-linecap="round"/><circle cx="10.4" cy="1.6" r="5" fill="#f0d860" stroke="#b09a30" stroke-width="0.9"/><circle cx="12.8" cy="-0.8" r="2.6" fill="#e4e4e4"/></g>
<g transform="translate(491 140)"><rect x="-13.5" y="-14" width="8.5" height="19.5" fill="url(#gdr)" rx="2.2"/><line x1="-13.2" y1="-10.5" x2="-5.3" y2="-8.5" stroke="#26318a" stroke-width="1.1"/><line x1="-13.2" y1="-6.3" x2="-5.3" y2="-4.3" stroke="#26318a" stroke-width="1.1"/><line x1="-13.2" y1="-2.1" x2="-5.3" y2="-0.1" stroke="#26318a" stroke-width="1.1"/><line x1="-13.2" y1="2.1" x2="-5.3" y2="4.1" stroke="#26318a" stroke-width="1.1"/><ellipse cx="-9.2" cy="-12.8" rx="4" ry="1.6" fill="#b4bef4"/><line x1="-5" y1="-8.5" x2="8" y2="-8.5" stroke="#5a6078" stroke-width="1.4"/><line x1="-5" y1="-5" x2="6" y2="-5" stroke="#5a6078" stroke-width="1.4"/><line x1="-5" y1="-1.5" x2="3" y2="-1.5" stroke="#5a6078" stroke-width="1.4"/><path d="M-4 4 L10 -2 M-2 -1 L9 9" fill="none" stroke="#c8b040" stroke-width="2.6"/><circle cx="-5" cy="5" r="2.6" fill="none" stroke="#b8a030" stroke-width="1.8"/><circle cx="9" cy="10" r="2.4" fill="none" stroke="#b8a030" stroke-width="1.8"/></g>
<g transform="translate(531 140)"><rect x="-13.5" y="-14" width="8.5" height="19.5" fill="url(#gdr)" rx="2.2"/><line x1="-13.2" y1="-10.5" x2="-5.3" y2="-8.5" stroke="#26318a" stroke-width="1.1"/><line x1="-13.2" y1="-6.3" x2="-5.3" y2="-4.3" stroke="#26318a" stroke-width="1.1"/><line x1="-13.2" y1="-2.1" x2="-5.3" y2="-0.1" stroke="#26318a" stroke-width="1.1"/><line x1="-13.2" y1="2.1" x2="-5.3" y2="4.1" stroke="#26318a" stroke-width="1.1"/><ellipse cx="-9.2" cy="-12.8" rx="4" ry="1.6" fill="#b4bef4"/><line x1="-5" y1="-8.5" x2="8" y2="-8.5" stroke="#5a6078" stroke-width="1.4"/><line x1="-5" y1="-5" x2="6" y2="-5" stroke="#5a6078" stroke-width="1.4"/><line x1="-5" y1="-1.5" x2="3" y2="-1.5" stroke="#5a6078" stroke-width="1.4"/><path d="M-2 -2 h7 l3 3 v8 h-10z" fill="#f0f0ff" stroke="#4a55b8" stroke-width="1.1"/><path d="M3 3 h7 l3 3 v8 h-10z" fill="#f4f4ff" stroke="#4a55b8" stroke-width="1.1"/><line x1="5" y1="9" x2="11" y2="9" stroke="#555" stroke-width="0.9"/><line x1="5" y1="11.5" x2="11" y2="11.5" stroke="#555" stroke-width="0.9"/></g>
<g transform="translate(571 140)"><rect x="-13.5" y="-14" width="8.5" height="19.5" fill="url(#gdg)" rx="2.2"/><line x1="-5" y1="-8.5" x2="8" y2="-8.5" stroke="#9c9c9c" stroke-width="1.4"/><line x1="-5" y1="-5" x2="6" y2="-5" stroke="#9c9c9c" stroke-width="1.4"/><line x1="-5" y1="-1.5" x2="3" y2="-1.5" stroke="#9c9c9c" stroke-width="1.4"/><rect x="-3" y="-2" width="12" height="12" fill="#b4b4b4" stroke="#8e8e8e" stroke-width="1"/><rect x="1" y="2" width="12" height="12" fill="#c0c0c0" stroke="#8e8e8e" stroke-width="1"/><line x1="3" y1="7" x2="11" y2="7" stroke="#999" stroke-width="1"/><line x1="3" y1="10" x2="11" y2="10" stroke="#999" stroke-width="1"/></g>
<g transform="translate(611 140)"><rect x="-11" y="-9" width="22" height="22" fill="#b0b0b0" stroke="#909090" stroke-width="1" rx="1.5"/><rect x="-5" y="-12" width="10" height="5" fill="#9a9a9a"/><rect x="-6" y="-3" width="17" height="15" fill="#bdbdbd" stroke="#8e8e8e" stroke-width="1"/><line x1="-3" y1="2" x2="8" y2="2" stroke="#999" stroke-width="1"/><line x1="-3" y1="5" x2="8" y2="5" stroke="#999" stroke-width="1"/><line x1="-3" y1="8" x2="8" y2="8" stroke="#999" stroke-width="1"/><path d="M-14 4 l4 -3 v6z" fill="#aaa"/></g>
<g transform="translate(651 140)"><rect x="-13.5" y="-14" width="8.5" height="19.5" fill="url(#gdr)" rx="2.2"/><line x1="-13.2" y1="-10.5" x2="-5.3" y2="-8.5" stroke="#26318a" stroke-width="1.1"/><line x1="-13.2" y1="-6.3" x2="-5.3" y2="-4.3" stroke="#26318a" stroke-width="1.1"/><line x1="-13.2" y1="-2.1" x2="-5.3" y2="-0.1" stroke="#26318a" stroke-width="1.1"/><line x1="-13.2" y1="2.1" x2="-5.3" y2="4.1" stroke="#26318a" stroke-width="1.1"/><ellipse cx="-9.2" cy="-12.8" rx="4" ry="1.6" fill="#b4bef4"/><line x1="-5" y1="-8.5" x2="8" y2="-8.5" stroke="#5a6078" stroke-width="1.4"/><line x1="-5" y1="-5" x2="6" y2="-5" stroke="#5a6078" stroke-width="1.4"/><line x1="-5" y1="-1.5" x2="3" y2="-1.5" stroke="#5a6078" stroke-width="1.4"/><rect x="-8" y="4" width="20" height="9" fill="#fff" stroke="#1a1a6a" stroke-width="1.3"/><text x="-6.5" y="11.5" font-size="7.5" fill="#111" font-weight="bold" font-family="Liberation Sans,sans-serif">ABC</text><path d="M0 2 l9 -12 l4 3 l-9 12 l-5 2z" fill="#f0c030" stroke="#9a7a10" stroke-width="0.8"/><path d="M9 -10 l4 3 l2 -3 l-4 -3z" fill="#e06050"/></g>
<g transform="translate(691 140)"><rect x="-13.5" y="-14" width="8.5" height="19.5" fill="url(#gdr)" rx="2.2"/><line x1="-13.2" y1="-10.5" x2="-5.3" y2="-8.5" stroke="#26318a" stroke-width="1.1"/><line x1="-13.2" y1="-6.3" x2="-5.3" y2="-4.3" stroke="#26318a" stroke-width="1.1"/><line x1="-13.2" y1="-2.1" x2="-5.3" y2="-0.1" stroke="#26318a" stroke-width="1.1"/><line x1="-13.2" y1="2.1" x2="-5.3" y2="4.1" stroke="#26318a" stroke-width="1.1"/><ellipse cx="-9.2" cy="-12.8" rx="4" ry="1.6" fill="#b4bef4"/><line x1="-5" y1="-8.5" x2="8" y2="-8.5" stroke="#5a6078" stroke-width="1.4"/><line x1="-5" y1="-5" x2="6" y2="-5" stroke="#5a6078" stroke-width="1.4"/><line x1="-5" y1="-1.5" x2="3" y2="-1.5" stroke="#5a6078" stroke-width="1.4"/><path d="M-4 -1 L12 13 M12 -1 L-4 13" fill="none" stroke="#1a1a1a" stroke-width="2.6" stroke-linecap="round"/></g>
<g transform="translate(730 140)"><rect x="-13" y="-13" width="5.5" height="13" fill="url(#gdr)" rx="1.3"/><rect x="-2" y="0" width="5.5" height="13" fill="url(#gdr)" rx="1.3"/><line x1="-7" y1="-9" x2="2" y2="-9" stroke="#555" stroke-width="1.1"/><line x1="4" y1="4" x2="13" y2="4" stroke="#555" stroke-width="1.1"/><line x1="4" y1="7" x2="10" y2="7" stroke="#555" stroke-width="1.1"/><path d="M-4 -8 q5 -4 9 0 l1 -3 l1 6 l-6 -1 l2 -1 q-3 -2 -6 0z" fill="#e05030"/><path d="M-13 6 q4 5 9 2 l-1 3 l4 -5 l-6 -2 l1 2 q-3 2 -6 -1z" fill="#f08030"/></g>
<g transform="translate(771 140)"><rect x="-13.5" y="-14" width="8.5" height="19.5" fill="url(#gdr)" rx="2.2"/><line x1="-13.2" y1="-10.5" x2="-5.3" y2="-8.5" stroke="#26318a" stroke-width="1.1"/><line x1="-13.2" y1="-6.3" x2="-5.3" y2="-4.3" stroke="#26318a" stroke-width="1.1"/><line x1="-13.2" y1="-2.1" x2="-5.3" y2="-0.1" stroke="#26318a" stroke-width="1.1"/><line x1="-13.2" y1="2.1" x2="-5.3" y2="4.1" stroke="#26318a" stroke-width="1.1"/><ellipse cx="-9.2" cy="-12.8" rx="4" ry="1.6" fill="#b4bef4"/><line x1="-5" y1="-8.5" x2="8" y2="-8.5" stroke="#5a6078" stroke-width="1.4"/><line x1="-5" y1="-5" x2="6" y2="-5" stroke="#5a6078" stroke-width="1.4"/><line x1="-5" y1="-1.5" x2="3" y2="-1.5" stroke="#5a6078" stroke-width="1.4"/><rect x="-3" y="-3" width="15" height="17" fill="#e8ecff" stroke="#5a68c0" stroke-width="1.2"/><path d="M0 1 h3 v3 h-3z M0 6 h3 v3 h-3z" fill="none" stroke="#4a55b0" stroke-width="0.9"/><line x1="5" y1="2.5" x2="10" y2="2.5" stroke="#4a55b0" stroke-width="1.1"/><line x1="5" y1="7.5" x2="10" y2="7.5" stroke="#4a55b0" stroke-width="1.1"/><line x1="0" y1="11.5" x2="10" y2="11.5" stroke="#4a55b0" stroke-width="1.1"/></g>
<g transform="translate(811 140)"><rect x="-12" y="-13" width="5.5" height="14" fill="url(#gdr)" rx="1.3"/><line x1="-6" y1="-8" x2="4" y2="-8" stroke="#555" stroke-width="1.1"/><line x1="-6" y1="-5" x2="1" y2="-5" stroke="#555" stroke-width="1.1"/><rect x="0" y="-2" width="13" height="14" fill="#fff" stroke="#1a1a6a" stroke-width="1.5"/><text x="4" y="9.5" font-size="12" fill="#000" font-weight="bold" font-family="Liberation Serif,serif">i</text></g>
<g transform="translate(851 140)"><path d="M-10 -12 l5 -1 l8 12 v12 h-5 v-10z" fill="#b4b4b4" stroke="#a0a0a0" stroke-width="0.8"/><line x1="3" y1="3" x2="13" y2="3" stroke="#aaa" stroke-width="1.2"/><line x1="3" y1="6" x2="10" y2="6" stroke="#aaa" stroke-width="1.2"/></g>
<path d="M875.5 146 h7 l-3.5 4z" fill="#111"/>
<rect x="890" y="122" width="1" height="34" fill="#c2c2c2"/><rect x="891" y="122" width="1" height="34" fill="#f6f6f6"/>
<rect x="896.5" y="126" width="2.2" height="2.2" fill="#9c9c9c"/><rect x="897.7" y="127.2" width="1.6" height="1.6" fill="#fdfdfd"/><rect x="896.5" y="130" width="2.2" height="2.2" fill="#9c9c9c"/><rect x="897.7" y="131.2" width="1.6" height="1.6" fill="#fdfdfd"/><rect x="896.5" y="134" width="2.2" height="2.2" fill="#9c9c9c"/><rect x="897.7" y="135.2" width="1.6" height="1.6" fill="#fdfdfd"/><rect x="896.5" y="138" width="2.2" height="2.2" fill="#9c9c9c"/><rect x="897.7" y="139.2" width="1.6" height="1.6" fill="#fdfdfd"/><rect x="896.5" y="142" width="2.2" height="2.2" fill="#9c9c9c"/><rect x="897.7" y="143.2" width="1.6" height="1.6" fill="#fdfdfd"/><rect x="896.5" y="146" width="2.2" height="2.2" fill="#9c9c9c"/><rect x="897.7" y="147.2" width="1.6" height="1.6" fill="#fdfdfd"/><rect x="896.5" y="150" width="2.2" height="2.2" fill="#9c9c9c"/><rect x="897.7" y="151.2" width="1.6" height="1.6" fill="#fdfdfd"/>
<g transform="translate(919.6 140)"><line x1="-11" y1="11" x2="11" y2="-11" stroke="#222" stroke-width="1.5"/><circle cx="-11" cy="11" r="2.3" fill="#d03030" stroke="#8a1818" stroke-width="0.6"/><circle cx="11" cy="-11" r="2.3" fill="#d03030" stroke="#8a1818" stroke-width="0.6"/></g>
<g transform="translate(960 140)"><path d="M-12 -11 q18 -2 23 21" fill="none" stroke="#222" stroke-width="1.6"/><circle cx="-12" cy="-11" r="2.3" fill="#d03030" stroke="#8a1818" stroke-width="0.6"/><circle cx="5" cy="-5" r="2.3" fill="#d03030" stroke="#8a1818" stroke-width="0.6"/><circle cx="11" cy="10" r="2.3" fill="#d03030" stroke="#8a1818" stroke-width="0.6"/></g>
<g transform="translate(1000 140)"><circle cx="-6" cy="-3" r="8" fill="none" stroke="#7a3ab8" stroke-width="1.4"/><circle cx="-6" cy="-3" r="1.5" fill="#d03030"/><ellipse cx="7" cy="-6" rx="5" ry="7" fill="#f4f090" stroke="#b8a820" stroke-width="1.2"/><ellipse cx="9" cy="0" rx="5" ry="6" fill="#f4f090" stroke="#b8a820" stroke-width="1.2"/><line x1="-11" y1="8" x2="7" y2="14" stroke="#5a3a8a" stroke-width="1.3"/><circle cx="-11" cy="8" r="2.3" fill="#c03040" stroke="#8a1818" stroke-width="0.6"/><circle cx="7" cy="14" r="2.3" fill="#c03040" stroke="#8a1818" stroke-width="0.6"/></g>
<g transform="translate(1039.6 140)"><rect x="-13" y="-9" width="25" height="18" fill="none" stroke="#222" stroke-width="1.6"/><circle cx="-13" cy="-9" r="2.3" fill="#d03030" stroke="#8a1818" stroke-width="0.6"/><circle cx="12" cy="9" r="2.3" fill="#d03030" stroke="#8a1818" stroke-width="0.6"/></g>
<g transform="translate(1079 140)"><path d="M-11 2 q0 -15 17 -15 l8 4 q-14 0 -14 8 q0 6 11 7 v8 q-22 -2 -22 -12z" fill="#a8d0f0" stroke="#4a80c0" stroke-width="1"/><path d="M11 6 v8 l-8 -5z" fill="#d4d8e0"/><path d="M-8 -3 q4 -9 16 -8" fill="none" stroke="#d03030" stroke-width="1.5"/><circle cx="-8" cy="-3" r="2.3" fill="#d03030" stroke="#8a1818" stroke-width="0.6"/><circle cx="5" cy="-9" r="2.3" fill="#d03030" stroke="#8a1818" stroke-width="0.6"/><circle cx="-4" cy="6" r="2.3" fill="#d03030" stroke="#8a1818" stroke-width="0.6"/></g>
<g transform="translate(1120 140)"><path d="M-12 0 l7 -5 l10 9 l7 -6 M-5 -5 l1 -10 M5 4 l1 9" fill="none" stroke="#999" stroke-width="1.3"/><path d="M-5 -5 l10 9" fill="none" stroke="#d03030" stroke-width="1.4"/><circle cx="-12" cy="0" r="2" fill="#aaa"/><circle cx="12" cy="-2" r="2" fill="#aaa"/><circle cx="-4" cy="-15" r="2" fill="#aaa"/><circle cx="6" cy="13" r="2" fill="#aaa"/><circle cx="-5" cy="-5" r="2.3" fill="#d03030" stroke="#8a1818" stroke-width="0.6"/><circle cx="5" cy="4" r="2.3" fill="#d03030" stroke="#8a1818" stroke-width="0.6"/></g>
<g transform="translate(1159.6 140.5)"><text x="-11" y="11" font-size="31" fill="#111" font-weight="bold" font-family="Liberation Serif,serif">A</text></g>
<g transform="translate(1199 140)"><path d="M-13 -6 l6 -6 h8 l3 3 l4 -3 l6 5 v8 l-10 11 h-17z" fill="#f0f0f0" stroke="#222" stroke-width="1.4"/><path d="M-8 -3 l3 -4 h4 l3 3 l4 -3 l3 3 v4 l-7 8 h-10z" fill="none" stroke="#d03040" stroke-width="1.3"/></g>
<g transform="translate(1240 140)"><path d="M-14 -3 l12 -8 l16 10 l-12 9z" fill="#cfe4ff" stroke="#2a3ab0" stroke-width="1.6"/><path d="M-8 -7 l16 10 M-2 -11 l-11 9" fill="none" stroke="#e06a30" stroke-width="1.4"/><path d="M-6 0 l8 -5 l6 4 l-8 5z" fill="#fff"/><line x1="-2" y1="0" x2="5" y2="0" stroke="#d02020" stroke-width="1.3"/></g>
<g transform="translate(1280 140)"><path d="M-14 -11 q0 -3 5 -2 q3 1 2 5 q-1 3 4 3 M-14 13 q0 -5 5 -4 q4 1 4 4 M8 -13 q5 2 8 -1 M8 11 q5 -3 8 -1" fill="none" stroke="#222" stroke-width="1.5"/><line x1="-1" y1="-8" x2="-1" y2="12" stroke="#3a3ab8" stroke-width="1" stroke-dasharray="1.5 1.5"/><line x1="10" y1="-10" x2="10" y2="9" stroke="#3a3ab8" stroke-width="1" stroke-dasharray="1.5 1.5"/><path d="M2 -5 h5 v5 h2.5 l-5 5 l-5 -5 h2.5z" fill="#f08030" stroke="#c05010" stroke-width="0.6"/><line x1="-1" y1="12" x2="10" y2="9" stroke="#d03030" stroke-width="1.2"/></g>
<g transform="translate(1320 140)"><path d="M-14 -6 q-1 -7 6 -6 q5 1 3 6 q-1 4 5 3 q6 -1 9 -6 M-14 12 q-1 -7 6 -6 q4 1 3 4 q0 3 6 2 q6 -1 9 -5" fill="none" stroke="#222" stroke-width="1.6"/><path d="M-2 -6 h5 v6 h2.5 l-5 5 l-5 -5 h2.5z" fill="#f07030" stroke="#c04a10" stroke-width="0.6"/></g>
<g transform="translate(1360 140)"><path d="M-14 -12 h9 v18 h-9z" fill="#f4f4f4" stroke="#b0b0b0" stroke-width="1"/><path d="M-8 -8 l14 -4 v22 l-14 4z" fill="#f4d880" stroke="#d8b040" stroke-width="0.8" opacity="0.9"/><path d="M1 -6 h12 v18 h-12z" fill="none" stroke="#e05040" stroke-width="1.2"/><circle cx="7" cy="5" r="3" fill="none" stroke="#e05040" stroke-width="1.1"/><circle cx="-9" cy="3" r="2.2" fill="none" stroke="#888" stroke-width="1"/></g>
<g transform="translate(1400 140)"><path d="M-13 -2 l11 -11 l14 7 l-11 11z" fill="#cfe0ff" stroke="#3a55b8" stroke-width="1.3"/><path d="M-11 5 l11 -11 l14 7 l-11 11z" fill="#b8d0ff" stroke="#3a55b8" stroke-width="1.3" opacity="0.85"/><path d="M-6 -5 q8 2 14 12" fill="none" stroke="#d03030" stroke-width="1.4"/></g>
<g transform="translate(1440 140)"><path d="M-13 -8 v17 q5 4 11 0 v-17z" fill="url(#gdr)" stroke="#2a3590" stroke-width="0.8"/><ellipse cx="-7.5" cy="-8" rx="5.5" ry="2.5" fill="#c0ccff" stroke="#2a3590" stroke-width="0.8"/><line x1="-1" y1="0" x2="8" y2="0" stroke="#e05030" stroke-width="1.8"/><path d="M6 -3.5 l5 3.5 l-5 3.5z" fill="#e05030"/><path d="M9 -11 q7 11 0 22" fill="none" stroke="#d03030" stroke-width="1.6"/></g>
<path d="M1463.5 146 h7 l-3.5 4z" fill="#111"/>
<rect x="1477" y="122" width="1" height="34" fill="#c2c2c2"/><rect x="1478" y="122" width="1" height="34" fill="#f6f6f6"/>
<rect x="1484.5" y="126" width="2.2" height="2.2" fill="#9c9c9c"/><rect x="1485.7" y="127.2" width="1.6" height="1.6" fill="#fdfdfd"/><rect x="1484.5" y="130" width="2.2" height="2.2" fill="#9c9c9c"/><rect x="1485.7" y="131.2" width="1.6" height="1.6" fill="#fdfdfd"/><rect x="1484.5" y="134" width="2.2" height="2.2" fill="#9c9c9c"/><rect x="1485.7" y="135.2" width="1.6" height="1.6" fill="#fdfdfd"/><rect x="1484.5" y="138" width="2.2" height="2.2" fill="#9c9c9c"/><rect x="1485.7" y="139.2" width="1.6" height="1.6" fill="#fdfdfd"/><rect x="1484.5" y="142" width="2.2" height="2.2" fill="#9c9c9c"/><rect x="1485.7" y="143.2" width="1.6" height="1.6" fill="#fdfdfd"/><rect x="1484.5" y="146" width="2.2" height="2.2" fill="#9c9c9c"/><rect x="1485.7" y="147.2" width="1.6" height="1.6" fill="#fdfdfd"/><rect x="1484.5" y="150" width="2.2" height="2.2" fill="#9c9c9c"/><rect x="1485.7" y="151.2" width="1.6" height="1.6" fill="#fdfdfd"/>
<g transform="translate(1508 140)"><path d="M-2 -13 h10 l5 5 v14 h-15z" fill="#f0f0ff" stroke="#8a88c8" stroke-width="1.1"/><rect x="1" y="-5" width="9" height="2.2" fill="#e06070"/><rect x="1" y="-1" width="9" height="2.2" fill="#e06070"/><rect x="1" y="3" width="9" height="2.2" fill="#e0a0a8"/><path d="M-11.4 11.3 L-0.8 1.8" fill="none" stroke="#b09a30" stroke-width="5.2" stroke-linecap="round"/><path d="M-11.4 11.3 L-0.8 1.8" fill="none" stroke="#f0d860" stroke-width="3.6" stroke-linecap="round"/><circle cx="0.7" cy="0.3" r="4.4" fill="#f0d860" stroke="#b09a30" stroke-width="0.9"/><circle cx="2.8" cy="-1.8" r="2.3" fill="#e4e4e4"/></g>
<g transform="translate(1548 140)"><line x1="-13" y1="-7" x2="12" y2="-7" stroke="#222" stroke-width="1.6"/><path d="M-5 -14 q12 2 9 11 q-3 6 -8 6" fill="none" stroke="#222" stroke-width="1.5"/><path d="M-12 11 q2 -5 8 -5 q5 0 7 -5" fill="none" stroke="#888" stroke-width="1.2" stroke-dasharray="1.6 1.6"/><line x1="-1" y1="-12" x2="12" y2="2" stroke="#d03030" stroke-width="1.3"/></g>
<g transform="translate(1588 140)"><line x1="-14" y1="-5" x2="6" y2="-5" stroke="#222" stroke-width="1.6"/><line x1="3" y1="-5" x2="3" y2="14" stroke="#222" stroke-width="1.6"/><line x1="3" y1="-14" x2="3" y2="-5" stroke="#888" stroke-width="1" stroke-dasharray="1.5 1.5"/><line x1="3" y1="-5" x2="13" y2="-5" stroke="#888" stroke-width="1" stroke-dasharray="1.5 1.5"/><line x1="-4" y1="-12" x2="11" y2="3" stroke="#d03030" stroke-width="1.3"/></g>
<g transform="translate(1628 140)"><path d="M-13 10 q9 1 11 -8 q2 -12 14 -12" fill="none" stroke="#222" stroke-width="1.7"/><line x1="-8" y1="-8" x2="7" y2="6" stroke="#d03030" stroke-width="1.3"/><line x1="-6" y1="10" x2="5" y2="-10" stroke="#d03030" stroke-width="1.2"/></g>
<g transform="translate(1668 140)"><path d="M-14 -12 h13 q13 0 13 13 v13" fill="none" stroke="#222" stroke-width="1.7"/><path d="M-1 -12 h13 v13" fill="none" stroke="#999" stroke-width="1" stroke-dasharray="1.5 1.5"/><path d="M-1 -12 q13 0 13 13" fill="none" stroke="#d03030" stroke-width="1.3"/></g>
<g transform="translate(1708 140)"><path d="M-13 -12 h15 l12 12 v13 h-27z" fill="#f4f4ff" stroke="#2a2a70" stroke-width="1.5"/><path d="M2 -12 l5 8 v10" fill="none" stroke="#888" stroke-width="1" stroke-dasharray="1.5 1.5"/><line x1="5" y1="6" x2="12" y2="6" stroke="#f08030" stroke-width="1.6"/><path d="M10 3 l4 3 l-4 3z" fill="#f08030"/></g>
<g transform="translate(17.5 184)"><path d="M-13 0 l12 -12 v7 h13 v10 h-13 v7z" fill="url(#gpu)" stroke="#6a50c0" stroke-width="1"/></g>
<g transform="translate(57.5 184)"><path d="M13 0 l-12 -12 v7 h-13 v10 h13 v7z" fill="url(#gpu)" stroke="#6a50c0" stroke-width="1"/></g>
<g transform="translate(98.7 184)"><path d="M-8 3 l9 -10 l8 4 l-9 10z" fill="#e8ecff" stroke="#3a4aa8" stroke-width="2"/><path d="M-4 2 l5 -5.5 l4 2 l-5 5.5z" fill="#3a4aa8"/><path d="M-13 4 q2 5 6 6 M-14 8 q3 4 7 5" fill="none" stroke="#4f80d8" stroke-width="1.6"/><path d="M7 -13 q5 1 6 5 M10 -15 q5 2 6 6" fill="none" stroke="#4f80d8" stroke-width="1.6"/></g>
<g transform="translate(140 184)"><rect x="1" y="-13" width="13" height="10" fill="#fff" stroke="#8a8a8a" stroke-width="1.4"/><rect x="-13" y="3" width="13" height="10" fill="#fff" stroke="#8a8a8a" stroke-width="1.4"/><path d="M-10 0 l8 -6 l-1 -3 l6 2 l-2 6 l-1.5 -2.5 l-7 5z" fill="#f09030" stroke="#c06818" stroke-width="0.5"/></g>
<g transform="translate(178.7 184)"><rect x="-5" y="-5" width="10" height="10" fill="#5a6ae0" stroke="#1a2ab0" stroke-width="1.2"/><rect x="-11" y="5" width="22" height="8" fill="#5a6ae0" stroke="#1a2ab0" stroke-width="1.2"/><path d="M0 -5 v-8 M0 -13 l-2.5 3 M0 -13 l2.5 3 M0 -8 l8 3 M8 -5 l-3.5 -0.5 M8 -5 l-1.5 -3" fill="none" stroke="#e04040" stroke-width="1.3"/></g>
<g transform="translate(218 184)"><g transform="translate(-2 -1)"><path d="M0 -10.5 l9.5 4.7 l-9.5 4.7 l-9.5 -4.7 z" fill="#c8a8f4" stroke="#4a2a90" stroke-width="0.8"/><path d="M-9.5 -5.8 l9.5 4.7 l0 10.5 l-9.5 -4.7 z" fill="#a070e8" stroke="#4a2a90" stroke-width="0.8"/><path d="M0 -1.1 l9.5 -4.7 l0 10.5 l-9.5 4.7 z" fill="#6a3fc8" stroke="#4a2a90" stroke-width="0.8"/></g><rect x="-14" y="11" width="28" height="4" fill="#f0d860" stroke="#b09a30" stroke-width="0.7"/><line x1="-12" y1="11" x2="-12" y2="13" stroke="#7a6a10" stroke-width="0.7"/><line x1="-9" y1="11" x2="-9" y2="13" stroke="#7a6a10" stroke-width="0.7"/><line x1="-6" y1="11" x2="-6" y2="13" stroke="#7a6a10" stroke-width="0.7"/><line x1="-3" y1="11" x2="-3" y2="13" stroke="#7a6a10" stroke-width="0.7"/><line x1="0" y1="11" x2="0" y2="13" stroke="#7a6a10" stroke-width="0.7"/><line x1="3" y1="11" x2="3" y2="13" stroke="#7a6a10" stroke-width="0.7"/><line x1="6" y1="11" x2="6" y2="13" stroke="#7a6a10" stroke-width="0.7"/><line x1="9" y1="11" x2="9" y2="13" stroke="#7a6a10" stroke-width="0.7"/><line x1="12" y1="11" x2="12" y2="13" stroke="#7a6a10" stroke-width="0.7"/><line x1="11" y1="-9" x2="11" y2="7" stroke="#e05040" stroke-width="1"/><path d="M11 -9 l-2 3 h4z M11 7 l-2 -3 h4z" fill="#e05040"/><line x1="-2" y1="-13" x2="9" y2="-11" stroke="#e05040" stroke-width="1"/></g>
<rect x="243.5" y="169.5" width="31" height="29" fill="#fafafa" stroke="#111" stroke-width="1.6"/>
<g transform="translate(258.7 184)"><path d="M-14 -10 l7 -4 h21 v20 l-7 7 h-21z M-14 -10 h21 l7 -4 M7 -10 v23" fill="none" stroke="#111" stroke-width="1.1"/><g transform="translate(-1 1)"><path d="M0 -9.5 l8.6 4.3 l-8.6 4.3 l-8.6 -4.3 z" fill="#c8a8f4" stroke="#4a2a90" stroke-width="0.8"/><path d="M-8.6 -5.2 l8.6 4.3 l0 9.5 l-8.6 -4.3 z" fill="#a070e8" stroke="#4a2a90" stroke-width="0.8"/><path d="M0 -1 l8.6 -4.3 l0 9.5 l-8.6 4.3 z" fill="#6a3fc8" stroke="#4a2a90" stroke-width="0.8"/></g></g>
<g transform="translate(299 184)"><text x="-3" y="-3" font-size="14" fill="#2a2ab8" font-weight="bold" font-family="Liberation Sans,sans-serif">R</text><path d="M-10 4 q9 8 20 -3" fill="none" stroke="#d04040" stroke-width="2"/><path d="M10 1 v-7" fill="none" stroke="#d04040" stroke-width="1.6"/><path d="M-4 -8 l3 14" fill="none" stroke="#5a6ad8" stroke-width="1.3"/></g>
<g transform="translate(338.7 184)"><path d="M-14 -3 l14 -7 l14 6 l-14 8z M-14 -3 v6 l14 8 l14 -8 v-7 M0 4 v7" fill="#fff" stroke="#777" stroke-width="1.1"/><path d="M-7 -3 l7 -3 l7 3 l-7 4z" fill="#f4f4f4" stroke="#555" stroke-width="1"/><path d="M0 -14 v6 M-14 5 l-3 3 M14 4 l3 3" fill="none" stroke="#e05040" stroke-width="1.1"/></g>
<g transform="translate(379 184)"><path d="M-14 2 q7 -6 14 -1 q7 5 14 -2 v9 q-7 6 -14 1 q-7 -5 -14 1z" fill="#8ab8f0" stroke="#3a6ab8" stroke-width="1"/><path d="M-10 5 q6 -4 12 0 q5 3 10 -1" fill="none" stroke="#e06060" stroke-width="1.2"/><line x1="-8" y1="-12" x2="8" y2="-12" stroke="#222" stroke-width="2"/><line x1="0" y1="-12" x2="0" y2="-1" stroke="#888" stroke-width="2"/><path d="M0 -8 l-3 4 h6z" fill="#e07030"/></g>
<g transform="translate(418 184)"><path d="M-14 0 l18 -12 l10 6 l-18 12z" fill="#f0c020" stroke="#a07010" stroke-width="0.8"/><path d="M-10 -1 l18 -12 M-6 1.5 l18 -12" fill="none" stroke="#d02020" stroke-width="2.4"/><path d="M-14 0 l10 6 v6 l-10 -6z" fill="#222"/><path d="M-4 6 l18 -12 v6 l-18 12z" fill="#444"/></g>
<g transform="translate(459.5 184)"><path d="M-2 -10 v17 q6 4 13 0 v-17z" fill="#c0d4ff" stroke="#5a70c8" stroke-width="1"/><ellipse cx="4.5" cy="-10" rx="6.5" ry="3" fill="#fff" stroke="#d060a0" stroke-width="1.2"/><path d="M-14 2 v9 q5 3 10 0 v-9z" fill="#a8c0f8" stroke="#5a70c8" stroke-width="1"/><ellipse cx="-9" cy="2" rx="5" ry="2.3" fill="#e8f0ff" stroke="#5a70c8" stroke-width="0.9"/><path d="M-11 -3 q1 -6 6 -7 l-1 -2 l5 2 l-3 4 l0 -2 q-4 1 -5 5z" fill="#f08030"/></g>
<g transform="translate(499 184)"><path d="M-14 -9 l6 -5 h22 v20 l-6 7 h-22z M-14 -9 h22 l6 -5 M8 -9 v22" fill="none" stroke="#555" stroke-width="1"/><path d="M-14 13 l6 -7 M-8 -14 v20 h22" fill="none" stroke="#d04050" stroke-width="0.8"/><g transform="translate(-1 1)"><path d="M0 -9 l8.1 4 l-8.1 4 l-8.1 -4 z" fill="#f06070"/><path d="M-8.1 -5 l8.1 4 l0 9 l-8.1 -4 z" fill="#e02030"/><path d="M0 -0.9 l8.1 -4 l0 9 l-8.1 4 z" fill="#a01020"/></g></g>
<g transform="translate(539 184)"><path d="M-4 -12 l9 -3 v22 l-9 6z" fill="#f080b0" stroke="#d05090" stroke-width="0.8" opacity="0.9"/><path d="M-14 3 l8 -4 l17 3 v6 l-8 4 l-17 -3z" fill="#fafafa" stroke="#999" stroke-width="1"/><path d="M-14 3 l17 3 l8 -4 M3 6 v6" fill="none" stroke="#999" stroke-width="0.9"/><path d="M-4 3 v10" fill="none" stroke="#d05090" stroke-width="1"/></g>
<g transform="translate(579 184)"><path d="M-15 -2 l6 -4 h12 v11 l-6 5 h-12z" fill="#a8d0f4" stroke="#5a90c8" stroke-width="1"/><path d="M1 -2 l6 -4 h9 v11 l-6 5 h-9z" fill="#b8dcf8" stroke="#5a90c8" stroke-width="1"/><line x1="0" y1="-14" x2="0" y2="12" stroke="#888" stroke-width="1"/><path d="M-8 -11 h6 M8 -11 h-6" fill="none" stroke="#e08030" stroke-width="1.4"/><path d="M-3 -11 l-3 -2 v4z M3 -11 l3 -2 v4z" fill="#e08030"/></g>
<g transform="translate(618 184)"><path d="M-13 -3 l6 -4 h19 v11 l-6 5 h-19z" fill="#a8d0f4" stroke="#5a90c8" stroke-width="1"/><path d="M-13 -3 h19 l6 -4 M6 -3 v12" fill="none" stroke="#5a90c8" stroke-width="0.9"/><line x1="-1" y1="-14" x2="-1" y2="14" stroke="#c05a5a" stroke-width="1.2"/><path d="M-4 -10 h6 M-4 11 h6" fill="none" stroke="#c05a5a" stroke-width="1.1"/></g>
<g transform="translate(658 184)"><rect x="-11" y="-8" width="21" height="16" fill="none" stroke="#333" stroke-width="1.8"/><circle cx="10" cy="8" r="1.5" fill="#222"/><circle cx="-11" cy="-8" r="1.5" fill="#222"/></g>
<path d="M683.5 182 h7 l-3.5 4z" fill="#111"/>
<g transform="translate(715 184)"><path d="M-13 0 l6.5 -11.5 h13 l6.5 11.5 l-6.5 11.5 h-13z" fill="none" stroke="#4a4ab8" stroke-width="1.6"/></g>
<path d="M739.2 182 h7 l-3.5 4z" fill="#111"/>
<g transform="translate(770 184)"><path d="M-10 5 v-17" fill="none" stroke="#2a2ab0" stroke-width="1.6"/><path d="M-10 -14 l-3 5 h6z" fill="#2a2ab0"/><path d="M-10 5 l14 -8" fill="none" stroke="#38b048" stroke-width="1.6"/><path d="M6 -4 l-5 0 l2.5 4z" fill="#38b048"/><path d="M-10 5 l14 6" fill="none" stroke="#e04040" stroke-width="1.6"/><path d="M6 12 l-5 -0.5 l2 -4z" fill="#e04040"/><text x="-6" y="-8" font-size="9" fill="#111" font-weight="bold" font-family="Liberation Sans,sans-serif">Z</text><text x="7" y="-2" font-size="9" fill="#111" font-weight="bold" font-family="Liberation Sans,sans-serif">Y</text><text x="6" y="14" font-size="9" fill="#111" font-weight="bold" font-family="Liberation Sans,sans-serif">X</text></g>
<g transform="translate(810 184)"><path d="M-11 -10 l8 -3 l14 9 v12 l-8 4 l-14 -10z" fill="none" stroke="#888" stroke-width="1" stroke-dasharray="2 1.5"/><path d="M-11 -10 l8 -3 l14 9 l-8 3z" fill="#ffe8e8" stroke="#e06060" stroke-width="1.3"/><path d="M3 -1 v13 M-11 -10 v12" fill="none" stroke="#888" stroke-width="1"/></g>
<g transform="translate(851 184)"><path d="M-12 -10 q4 -6 12 -3 l8 6 l-9 12z" fill="#7a8a20" stroke="#4a5a10" stroke-width="1"/><path d="M-1 5 l9 -12 l6 9 l-10 10z" fill="#fffff0" stroke="#c8c8a0" stroke-width="0.8"/><path d="M-10 -8 q3 -4 8 -2" fill="none" stroke="#c8d860" stroke-width="1.6"/></g>
<g transform="translate(889 184)"><circle cx="0" cy="0" r="12" fill="none" stroke="#555" stroke-width="2.2"/></g>
<path d="M913.5 190 h7 l-3.5 4z" fill="#111"/>
<rect x="929.5" y="166" width="1" height="34" fill="#c2c2c2"/><rect x="930.5" y="166" width="1" height="34" fill="#f6f6f6"/>
<rect x="935" y="170" width="2.2" height="2.2" fill="#9c9c9c"/><rect x="936.2" y="171.2" width="1.6" height="1.6" fill="#fdfdfd"/><rect x="935" y="174" width="2.2" height="2.2" fill="#9c9c9c"/><rect x="936.2" y="175.2" width="1.6" height="1.6" fill="#fdfdfd"/><rect x="935" y="178" width="2.2" height="2.2" fill="#9c9c9c"/><rect x="936.2" y="179.2" width="1.6" height="1.6" fill="#fdfdfd"/><rect x="935" y="182" width="2.2" height="2.2" fill="#9c9c9c"/><rect x="936.2" y="183.2" width="1.6" height="1.6" fill="#fdfdfd"/><rect x="935" y="186" width="2.2" height="2.2" fill="#9c9c9c"/><rect x="936.2" y="187.2" width="1.6" height="1.6" fill="#fdfdfd"/><rect x="935" y="190" width="2.2" height="2.2" fill="#9c9c9c"/><rect x="936.2" y="191.2" width="1.6" height="1.6" fill="#fdfdfd"/><rect x="935" y="194" width="2.2" height="2.2" fill="#9c9c9c"/><rect x="936.2" y="195.2" width="1.6" height="1.6" fill="#fdfdfd"/>
<g transform="translate(959 184)"><path d="M-14 -13 h4 v3 h6 v-3 h4 v10 l-4 3 h-6 l-4 -3z" fill="#7a90e8" stroke="#d050a0" stroke-width="1"/><rect x="-9" y="0" width="4" height="5" fill="#e050a0"/><path d="M-3.7 12.6 L7.3 2.7" fill="none" stroke="#b09a30" stroke-width="5.5" stroke-linecap="round"/><path d="M-3.7 12.6 L7.3 2.7" fill="none" stroke="#f0d860" stroke-width="3.7" stroke-linecap="round"/><circle cx="8.9" cy="1" r="4.6" fill="#f0d860" stroke="#b09a30" stroke-width="0.9"/><circle cx="11.2" cy="-1.2" r="2.4" fill="#e4e4e4"/></g>
<g transform="translate(1001.5 184)"><text x="-12" y="9" font-size="24" fill="#1010e0" font-weight="900" font-family="Noto Sans CJK SC,sans-serif">名</text></g>
<path d="M1022.5 190 h7 l-3.5 4z" fill="#111"/>
<rect x="1036.5" y="166" width="1" height="34" fill="#c2c2c2"/><rect x="1037.5" y="166" width="1" height="34" fill="#f6f6f6"/>
<rect x="1043" y="170" width="2.2" height="2.2" fill="#9c9c9c"/><rect x="1044.2" y="171.2" width="1.6" height="1.6" fill="#fdfdfd"/><rect x="1043" y="174" width="2.2" height="2.2" fill="#9c9c9c"/><rect x="1044.2" y="175.2" width="1.6" height="1.6" fill="#fdfdfd"/><rect x="1043" y="178" width="2.2" height="2.2" fill="#9c9c9c"/><rect x="1044.2" y="179.2" width="1.6" height="1.6" fill="#fdfdfd"/><rect x="1043" y="182" width="2.2" height="2.2" fill="#9c9c9c"/><rect x="1044.2" y="183.2" width="1.6" height="1.6" fill="#fdfdfd"/><rect x="1043" y="186" width="2.2" height="2.2" fill="#9c9c9c"/><rect x="1044.2" y="187.2" width="1.6" height="1.6" fill="#fdfdfd"/><rect x="1043" y="190" width="2.2" height="2.2" fill="#9c9c9c"/><rect x="1044.2" y="191.2" width="1.6" height="1.6" fill="#fdfdfd"/><rect x="1043" y="194" width="2.2" height="2.2" fill="#9c9c9c"/><rect x="1044.2" y="195.2" width="1.6" height="1.6" fill="#fdfdfd"/>
<g transform="translate(1066.5 184)"><rect x="-13" y="-10" width="12" height="15" fill="#dfe4e8" stroke="#333" stroke-width="1.3"/><rect x="-8" y="-12" width="12" height="15" fill="#e8ecf0" stroke="#333" stroke-width="1.3"/><rect x="-4" y="-1" width="15" height="14" fill="#e8f4f0" stroke="#2a5a5a" stroke-width="1.5"/><path d="M-4 3.5 h15 M-4 8 h15 M1 -1 v14 M6 -1 v14" fill="none" stroke="#2a7a7a" stroke-width="1"/><path d="M2 -6 l3 -6 l2 5 l5 -1 l-3 5z" fill="#f0e060" stroke="#b0a020" stroke-width="0.8"/></g>
<g transform="translate(1107 184)"><path d="M-11 -2 l5 -5 v18 l-5 4z" fill="#3a80d0"/><path d="M-6 -7 h6 v18 h-6z" fill="#2a60b8"/><path d="M2 -12 h10 v16 h-10z" fill="#2a70c8"/><path d="M-6 -7 l3 -4 l3 4" fill="#e8d040" stroke="#b09a20" stroke-width="0.6"/><circle cx="3" cy="5" r="3" fill="#f08030"/><path d="M-2 8 l8 -6" fill="none" stroke="#f0c030" stroke-width="2"/></g>
<g transform="translate(1149 184)"><rect x="-12" y="-14" width="12" height="20" fill="#fff" stroke="#111" stroke-width="1.8"/><line x1="-12" y1="-8" x2="0" y2="-14" stroke="#111" stroke-width="2.2"/><line x1="-12" y1="-2" x2="0" y2="-8" stroke="#111" stroke-width="2.2"/><line x1="-12" y1="4" x2="0" y2="-2" stroke="#111" stroke-width="2.2"/><rect x="-12" y="8" width="12" height="6" fill="#fff" stroke="#e04040" stroke-width="1" stroke-dasharray="2 1.5"/><line x1="6" y1="-12" x2="6" y2="10" stroke="#e02020" stroke-width="1.6"/><path d="M6 13 l-3.5 -5 h7z" fill="#e02020"/></g>
<g transform="translate(1186 184)"><path d="M-3 -12 h14 v9 h-5 v8 h5 v8 h-18 v-8 h4z" fill="#e8e0a0" stroke="#a09850" stroke-width="1"/><rect x="3" y="-3" width="6" height="3" fill="#6a8a8a"/><line x1="-12" y1="-8" x2="-12" y2="4" stroke="#e03040" stroke-width="1.6"/><path d="M-13 0 h7" fill="none" stroke="#e03040" stroke-width="1.6"/><path d="M-7 -3 l4 3 l-4 3z" fill="#e03040"/><circle cx="-12" cy="-1" r="2.2" fill="#e03040"/></g>
<rect x="1209" y="168" width="32" height="32" fill="#c4d4e4" opacity="0.55"/>
<g transform="translate(1225 184)"><path d="M-6 -13 h14 v9 h-4 v8 h6 v-8" fill="#e8e0a0" stroke="#a09850" stroke-width="1"/><rect x="-9" y="-1" width="20" height="14" fill="#a8d0f8" stroke="#3a6ab8" stroke-width="1.2"/><path d="M-9 3.5 h20 M-9 8 h20 M-4 -1 v14 M1 -1 v14 M6 -1 v14" fill="none" stroke="#3a6ab8" stroke-width="0.9"/><line x1="-12" y1="-12" x2="-12" y2="-3" stroke="#e03040" stroke-width="1.5"/><path d="M-14 -6 h6" fill="none" stroke="#e03040" stroke-width="1.5"/><circle cx="-12" cy="-7" r="2" fill="#e03040"/></g>
<g transform="translate(1267 184)"><circle cx="1" cy="-1" r="11.5" fill="#d8d8d8" stroke="#aaa" stroke-width="1"/><path d="M-9 -5 q10 -8 20 0" fill="none" stroke="#f4f4f4" stroke-width="2"/><path d="M-9.8 10.5 L2.8 -0.8" fill="none" stroke="#b09a30" stroke-width="6.2" stroke-linecap="round"/><path d="M-9.8 10.5 L2.8 -0.8" fill="none" stroke="#f0d860" stroke-width="4.2" stroke-linecap="round"/><circle cx="4.6" cy="-2.6" r="5.2" fill="#f0d860" stroke="#b09a30" stroke-width="0.9"/><circle cx="7.1" cy="-5.1" r="2.8" fill="#e4e4e4"/></g>
<g transform="translate(1305 184)"><rect x="-13" y="-6" width="19" height="19" fill="#f4f4f4" stroke="#555" stroke-width="1.1"/><text x="-11" y="11" font-size="21" fill="#111" font-weight="normal" font-family="Liberation Serif,serif">A</text><path d="M2 2 l9 -12 l3 2.5 l-9 12 l-4 1z" fill="#f0c030" stroke="#9a7a10" stroke-width="0.7"/><path d="M11 -10 l3 2.5 l1.5 -2 l-3 -2.5z" fill="#e06050"/></g>
<g transform="translate(1346.5 184)"><path d="M-13 -12 h7 v16 l-3.5 6 l-3.5 -6z" fill="#d8d8d8" stroke="#333" stroke-width="1.2"/><path d="M-13 -6 l7 3 M-13 -1 l7 3 M-13 4 l5 2" fill="none" stroke="#333" stroke-width="1"/><path d="M0 -10 v10 q5 3 11 0 v-10z" fill="#d0d0d0" stroke="#222" stroke-width="1.3"/><ellipse cx="5.5" cy="-10" rx="5.5" ry="2.4" fill="#eee" stroke="#222" stroke-width="1.2"/><path d="M3 3 h5 l1 6 q4 1 4 4 h-15 q0 -3 4 -4z" fill="#f0e090" stroke="#b0a040" stroke-width="0.8"/></g>
<g transform="translate(1386 184)"><rect x="-14" y="-11" width="28" height="23" fill="#0a7a80" stroke="#064a50" stroke-width="1.4"/><rect x="-10" y="-7" width="20" height="5" fill="#cfeef0" stroke="#064a50" stroke-width="0.8"/><path d="M-9 2 h3 v3 h-3z M-4 2 h3 v3 h-3z M1 2 h3 v3 h-3z M6 2 h3 v3 h-3z M-9 7 h3 v3 h-3z M-4 7 h3 v3 h-3z M1 7 h3 v3 h-3z M6 7 h3 v3 h-3z" fill="#bfe8e8"/><rect x="-14" y="10" width="28" height="3" fill="#1a2a70"/></g>
<path d="M1410 190 h7 l-3.5 4z" fill="#111"/>
<rect x="1424.7" y="166" width="1" height="34" fill="#c2c2c2"/><rect x="1425.7" y="166" width="1" height="34" fill="#f6f6f6"/>
<rect x="1431.5" y="170" width="2.2" height="2.2" fill="#9c9c9c"/><rect x="1432.7" y="171.2" width="1.6" height="1.6" fill="#fdfdfd"/><rect x="1431.5" y="174" width="2.2" height="2.2" fill="#9c9c9c"/><rect x="1432.7" y="175.2" width="1.6" height="1.6" fill="#fdfdfd"/><rect x="1431.5" y="178" width="2.2" height="2.2" fill="#9c9c9c"/><rect x="1432.7" y="179.2" width="1.6" height="1.6" fill="#fdfdfd"/><rect x="1431.5" y="182" width="2.2" height="2.2" fill="#9c9c9c"/><rect x="1432.7" y="183.2" width="1.6" height="1.6" fill="#fdfdfd"/><rect x="1431.5" y="186" width="2.2" height="2.2" fill="#9c9c9c"/><rect x="1432.7" y="187.2" width="1.6" height="1.6" fill="#fdfdfd"/><rect x="1431.5" y="190" width="2.2" height="2.2" fill="#9c9c9c"/><rect x="1432.7" y="191.2" width="1.6" height="1.6" fill="#fdfdfd"/><rect x="1431.5" y="194" width="2.2" height="2.2" fill="#9c9c9c"/><rect x="1432.7" y="195.2" width="1.6" height="1.6" fill="#fdfdfd"/>
<g transform="translate(1455 184)"><path d="M-14 -9 l6 -5 h22 v20 l-6 7 h-22z M-14 -9 h22 l6 -5 M8 -9 v22" fill="none" stroke="#444" stroke-width="1.1"/><path d="M-14 13 l6 -7 M-8 -14 v20 h22" fill="none" stroke="#d04050" stroke-width="0.8"/><g transform="translate(-1 1)"><path d="M0 -9 l8.1 4 l-8.1 4 l-8.1 -4 z" fill="#f06070"/><path d="M-8.1 -5 l8.1 4 l0 9 l-8.1 -4 z" fill="#e02030"/><path d="M0 -0.9 l8.1 -4 l0 9 l-8.1 4 z" fill="#a01020"/></g></g>
<g transform="translate(1494.5 184)"><path d="M-9 -12 h18 v6 l-5 7 h-8 l-5 -7z" fill="#f8c020" stroke="#c08a10" stroke-width="1"/><path d="M-12 -2 v14 h24 v-14 h-4 v9 h-16 v-9z" fill="#d8d8d0" stroke="#777" stroke-width="1.2"/></g>
<g transform="translate(1535 184)"><path d="M-14 -8 l6 -4 l6 3 v17 l-6 4 l-6 -3z" fill="#a8c8f8" stroke="#5a78c8" stroke-width="1"/><path d="M-14 -8 l6 3 l6 -4 M-8 -5 v17" fill="none" stroke="#5a78c8" stroke-width="0.8"/><path d="M2 -2 l6 -3 l6 3 v13 l-6 3 l-6 -3z" fill="#f8b848" stroke="#c07a18" stroke-width="1"/><path d="M2 -2 l6 3 l6 -3" fill="#c8dcfc" stroke="#5a78c8" stroke-width="0.8"/><path d="M-8 6 l8 6" fill="none" stroke="#e06020" stroke-width="2"/><path d="M2 13 l-5 0 l3 -4z" fill="#e06020"/></g>
<g transform="translate(1575 184)"><path d="M-13 -7 l8 -5 l8 4 v16 l-8 5 l-8 -4z" fill="#c8dcfc" stroke="#5a78c8" stroke-width="1"/><path d="M-13 -7 l8 4 l8 -5 M-5 -3 v16" fill="none" stroke="#5a78c8" stroke-width="0.8"/><path d="M-5 -3 l8 -5 l10 7 v9 l-18 5z" fill="#f8b848" stroke="#c07a18" stroke-width="0.8"/><path d="M1 1 l9 5" fill="none" stroke="#e05020" stroke-width="2"/><path d="M13 8 l-6 -0.5 l3 -4.5z" fill="#e05020"/></g>
<g transform="translate(1615 184)"><path d="M-14 -10 l7 -4 l7 3 v9 l-7 4 l-7 -3z" fill="#c8dcfc" stroke="#5a78c8" stroke-width="1"/><path d="M-14 -10 l7 3 l7 -4 M-7 -7 v9" fill="none" stroke="#5a78c8" stroke-width="0.8"/><path d="M0 4 q2 8 12 6 v-12 l4 2 v14 q-14 4 -20 -6z" fill="#f8a860" stroke="#c06a28" stroke-width="0.9"/><path d="M-6 -3 l8 9" fill="none" stroke="#e05020" stroke-width="2"/><path d="M5 9 l-5.5 -1.5 l4 -3.5z" fill="#e05020"/></g>
<path d="M1638.5 190 h7 l-3.5 4z" fill="#111"/>
<rect x="1652" y="164" width="1" height="40" fill="#c6c6c6"/><rect x="1653" y="164" width="1" height="40" fill="#f2f2f2"/>
<rect x="-4" y="213.5" width="108" height="24" rx="3" fill="#fff" stroke="#8e9aa8" stroke-width="1.4"/>
<rect x="82" y="214.5" width="21.5" height="22" rx="2.5" fill="url(#gcb)" stroke="#4a6aa8" stroke-width="1"/>
<path d="M87 222 h12 l-6 8z" fill="#0a1020"/>
<text x="10" y="232" font-size="15.5" fill="#111" font-weight="normal" font-family="Noto Sans CJK SC,sans-serif" text-anchor="end">无选择过滤器</text>
<rect x="116.5" y="213.5" width="199" height="24" rx="3" fill="#fff" stroke="#8e9aa8" stroke-width="1.4"/>
<rect x="293.5" y="214.5" width="21.5" height="22" rx="2.5" fill="url(#gcb)" stroke="#4a6aa8" stroke-width="1"/>
<path d="M298.5 222 h12 l-6 8z" fill="#0a1020"/>
<text x="119" y="232" font-size="15.5" fill="#111" font-weight="normal" font-family="Noto Sans CJK SC,sans-serif">整个装配</text>
<g transform="translate(336 224.8)"><path d="M-9 -4 h5 v-5 h4 v16 h-9z" fill="#a8a8a8" stroke="#8a8a8a" stroke-width="0.8"/><circle cx="4" cy="-3" r="3.6" fill="none" stroke="#9a9a9a" stroke-width="2"/><circle cx="8" cy="3" r="3.6" fill="none" stroke="#9a9a9a" stroke-width="2"/><line x1="-7" y1="0" x2="-2" y2="0" stroke="#888" stroke-width="1"/></g>
<rect x="356" y="210" width="1" height="32" fill="#c2c2c2"/><rect x="357" y="210" width="1" height="32" fill="#f6f6f6"/>
<g transform="translate(373 224.8)"><path d="M-8 -6 q3 -4 7 -1 l0 -3 l3 5 l-6 1 l2 -2 q-3 -1 -5 1z" fill="#9a9a9a"/><path d="M-1 1 h10 l-4 5 v5 h-2 v-5z" fill="#9a9a9a" stroke="#888" stroke-width="0.6"/></g>
<g transform="translate(399 224.8)"><rect x="-10" y="-10.5" width="20" height="21" fill="#f0f0f0" stroke="#d03050" stroke-width="1.6"/><path d="M-5 -7 v8 M-9 -3 h8" fill="none" stroke="#8a1020" stroke-width="1.6"/><circle cx="4" cy="4" r="3" fill="none" stroke="#f0a020" stroke-width="1.8"/><path d="M1 7 l-2 2" fill="none" stroke="#f0a020" stroke-width="1.6"/></g>
<path d="M417.5 223 h7 l-3.5 4z" fill="#111"/>
<g transform="translate(443 224.8)"><path d="M-9 -4 q2 -6 8 -4 q3 1 3 5" fill="none" stroke="#222" stroke-width="1.8"/><path d="M-11 -7 l1 6 l5 -3z" fill="#222"/><circle cx="3" cy="5" r="4.5" fill="none" stroke="#d02020" stroke-width="1.3"/><path d="M3 -3 v16 M-5 5 h16" fill="none" stroke="#d02020" stroke-width="1.5"/></g>
<g transform="translate(474 224.8)"><path d="M-11 -7 q3 -4 6 -1 q3 3 6 -1 M-9 -3 q4 3 9 -2" fill="none" stroke="#333" stroke-width="1.5"/><path d="M-2 -2 l5 5" fill="none" stroke="#333" stroke-width="1.4"/><rect x="2" y="2" width="7" height="10" fill="#f8f0c0" stroke="#b0a040" stroke-width="1"/><path d="M2 6 h7 M5.5 2 v10" fill="none" stroke="#b0a040" stroke-width="0.8"/></g>
<rect x="491" y="210" width="1" height="32" fill="#c2c2c2"/><rect x="492" y="210" width="1" height="32" fill="#f6f6f6"/>
<g transform="translate(510 224.8)"><path d="M-9 0 l4.5 -8 h9 l4.5 8 l-4.5 8 h-9z" fill="none" stroke="#111" stroke-width="1.6"/><circle cx="0" cy="0" r="1.8" fill="#d02020"/></g>
<g transform="translate(540 224.8)"><rect x="-9.5" y="-7.5" width="18" height="15.5" fill="none" stroke="#111" stroke-width="1.5" stroke-dasharray="3 2"/><circle cx="-10" cy="-8" r="1.6" fill="#d02020"/><path d="M9 9 l-1 -4 l-3 3z" fill="#d02020"/></g>
<path d="M559.5 222 h7 l-3.5 4z" fill="#111"/>
<rect x="575" y="210" width="1" height="32" fill="#c2c2c2"/><rect x="576" y="210" width="1" height="32" fill="#f6f6f6"/>
<g transform="translate(593 224.8)"><path d="M-10 -1 l6 -6 h12 l3 4 v8 l-6 5 h-12z" fill="#f4f4f4" stroke="#555" stroke-width="1.1"/><path d="M-10 -1 q3 3 3 8 M-7 7 l5 -5 h13" fill="none" stroke="#555" stroke-width="1"/><path d="M-4 -5 l9 1" fill="none" stroke="#e03040" stroke-width="2.2"/><path d="M-10 -1 l5 -6 h13" fill="none" stroke="#e8a0a0" stroke-width="1"/></g>
<g transform="translate(622.5 224.8)"><path d="M-10 -6 l9 -4 l11 4 v11 l-10 5 l-10 -5z" fill="#a8d8f8" stroke="#3a80d0" stroke-width="1"/><path d="M-10 -6 l10 4 l10 -4 l-11 -4z" fill="#e8f4ff" stroke="#3a80d0" stroke-width="0.8"/><path d="M0 -2 l10 -4 v11 l-10 5z" fill="#3a8ae0" stroke="#2a6ac0" stroke-width="0.8"/><path d="M-1 -10 v-2" fill="none" stroke="#e05050" stroke-width="1.2"/></g>
<rect x="637.5" y="75" width="1" height="42" fill="#bcbcbc"/><rect x="638.5" y="75" width="1.2" height="42" fill="#fafafa"/>
<rect x="1015" y="75" width="1" height="42" fill="#bcbcbc"/><rect x="1016" y="75" width="1.2" height="42" fill="#fafafa"/>
<rect x="1524.7" y="75" width="1" height="42" fill="#bcbcbc"/><rect x="1525.7" y="75" width="1.2" height="42" fill="#fafafa"/>
<rect x="192.5" y="119" width="1" height="42" fill="#bcbcbc"/><rect x="193.5" y="119" width="1.2" height="42" fill="#fafafa"/>
<rect x="422.5" y="119" width="1" height="42" fill="#bcbcbc"/><rect x="423.5" y="119" width="1.2" height="42" fill="#fafafa"/>
<rect x="890" y="119" width="1" height="42" fill="#bcbcbc"/><rect x="891" y="119" width="1.2" height="42" fill="#fafafa"/>
<rect x="1477" y="119" width="1" height="42" fill="#bcbcbc"/><rect x="1478" y="119" width="1.2" height="42" fill="#fafafa"/>
<rect x="929.5" y="163" width="1" height="41" fill="#bcbcbc"/><rect x="930.5" y="163" width="1.2" height="41" fill="#fafafa"/>
<rect x="1036.5" y="163" width="1" height="41" fill="#bcbcbc"/><rect x="1037.5" y="163" width="1.2" height="41" fill="#fafafa"/>
<rect x="1424.7" y="163" width="1" height="41" fill="#bcbcbc"/><rect x="1425.7" y="163" width="1.2" height="41" fill="#fafafa"/>
</svg>
<style>
#panel{left:0;top:246px;width:456px;height:798px;background:linear-gradient(#f1f1f1 0,#e4e4e4 40px,#e6e6e6 41px);}
#panelR{left:455px;top:246px;width:1px;height:798px;background:#8a8a8a;}
#tree{left:0;top:286px;width:443px;height:676px;background:#fff;border:1px solid #a9a9a9;border-left:none;}
#colhdr{left:0;top:287px;width:441px;height:24px;background:linear-gradient(#f4f4f4 0,#ededed 45%,#dcdcdc 55%,#d3d3d3 100%);border-bottom:1px solid #b5b5b5;}
.ch{position:absolute;top:292px;font-size:15px;line-height:16px;white-space:nowrap;color:#222;}
.vl{position:absolute;top:312px;width:1px;height:626px;background:#e4e4e4;}
.hvl{position:absolute;top:288px;width:1px;height:23px;background:#bdbdbd;}
.hl{position:absolute;left:0;width:441px;height:1px;background:#e9e9e9;}
.row-alt{position:absolute;left:0;width:441px;height:25px;background:#f6f6f6;}
#sel{left:27px;top:364px;width:414px;height:25px;background:#0a78d2;}
.svl{position:absolute;top:364px;width:1px;height:25px;background:#7fdcff;}
#treesep{left:172px;top:312px;width:2px;height:626px;background:#3a3a3a;}
#hscroll{left:0;top:938px;width:441px;height:23px;background:#f1f1f1;}
#hthumb{left:0;top:940px;width:158px;height:20px;background:#c9c9c9;}
#status{left:0;top:1044px;width:1728px;height:28px;background:linear-gradient(#f4f4f4 0,#e4e4e4 3px,#dcdcdc 60%,#d0d0d0 100%);}
#botstrip{left:0;top:1072px;width:1728px;height:8px;background:linear-gradient(#555 0,#2b2b2d 2px,#1d1d20 100%);}
.prow{position:absolute;left:0;width:442px;height:29px;background:linear-gradient(#f0f0f0 0,#e2e2e2 50%,#d2d2d2 100%);border:1px solid #c2c2c2;border-left:none;}
</style>
<div id="panel" class="abs"></div>
<div id="panelR" class="abs"></div>
<div class="t" style="right:1598.1px;top:257px;font-size:16.6px;font-weight:bold;line-height:18px;color:#111;">工序导航器 - 程序顺序</div>
<svg class="abs" style="left:419px;top:259px" width="19" height="17" viewBox="0 0 19 17"><rect x="2" y="2.5" width="15" height="12" fill="none" stroke="#111" stroke-width="2"/><rect x="1" y="1" width="17" height="3" fill="#111"/></svg>
<div id="tree" class="abs"></div>
<div id="colhdr" class="abs"></div>
<div class="hvl" style="left:172px"></div><div class="hvl" style="left:224px"></div><div class="hvl" style="left:275px"></div><div class="hvl" style="left:361px"></div><div class="hvl" style="left:433px"></div>
<span class="ch" style="left:181px">换刀</span><span class="ch" style="left:233px">刀轨</span><span class="ch" style="left:283px">刀具</span><span class="ch" style="left:369px">刀具号</span>
<div class="row-alt" style="top:338px"></div>
<div class="row-alt" style="top:390px"></div><div class="row-alt" style="top:442px"></div><div class="row-alt" style="top:494px"></div><div class="row-alt" style="top:546px"></div><div class="row-alt" style="top:598px"></div><div class="row-alt" style="top:650px"></div><div class="row-alt" style="top:702px"></div><div class="row-alt" style="top:754px"></div><div class="row-alt" style="top:806px"></div><div class="row-alt" style="top:858px"></div><div class="row-alt" style="top:910px"></div>
<div class="vl" style="left:224px"></div><div class="vl" style="left:275px"></div><div class="vl" style="left:361px"></div><div class="vl" style="left:433px"></div>
<div id="treesep" class="abs"></div>
<div class="t" style="right:1656.9px;top:316px;font-size:15.5px;line-height:17px;color:#6a6a6a;">NC_PROGRAM</div>
<svg class="abs" style="left:-8px;top:343px" width="14" height="17" viewBox="0 0 14 17"><rect x="0.5" y="2.5" width="12" height="13" fill="#e8e4c0" stroke="#9a9470"/><rect x="5" y="6" width="6" height="7" fill="#fff" stroke="#4a45b0" stroke-width="1.4"/></svg>
<div class="t" style="left:10px;top:342.5px;font-size:15.5px;line-height:17px;color:#333;">未用项</div>
<div id="sel" class="abs"></div>
<div class="svl" style="left:224px"></div><div class="svl" style="left:275px"></div><div class="svl" style="left:361px"></div><div class="svl" style="left:433px"></div>
<div class="abs" style="left:172px;top:364px;width:2px;height:25px;background:#0d3a66"></div>
<svg class="abs" style="left:-6px;top:366px" width="32" height="22" viewBox="0 0 32 22"><path d="M0 5 L3 9 L8 1" fill="none" stroke="#1fae3a" stroke-width="2.4"/><path d="M13.5 5.5 h6 l1.5 2 h8.5 v12 h-16z" fill="#efe7b0" stroke="#a89f68"/><rect x="21" y="9" width="8" height="10" fill="#f6f2d4" stroke="#a89f68" stroke-width=".6"/><text x="22" y="18" font-family="Liberation Sans,sans-serif" font-size="10" font-weight="bold" fill="#3b2fb8">s</text></svg>
<div class="t" style="left:30px;top:368px;font-size:15.5px;line-height:17px;color:#d6ecff;">PROGRAM</div>
<div id="hscroll" class="abs"></div>
<div id="hthumb" class="abs"></div>
<svg class="abs" style="left:424px;top:943px" width="12" height="13" viewBox="0 0 12 13"><path d="M3 2 L8.5 6.5 L3 11" fill="none" stroke="#555" stroke-width="1.8"/></svg>
<div class="abs" style="left:0;top:969px;width:441px;height:1px;background:#f8f8f8"></div>
<div class="abs" style="left:157px;top:966px;width:88px;height:7px;background:linear-gradient(#dcdcdc,#c6c6c6);border:1px solid #b8b8b8;border-radius:2px"></div>
<div class="prow" style="top:979px"></div>
<div class="prow" style="top:1008px"></div>
<div class="abs" style="left:413px;top:980px;width:1px;height:27px;background:#bcbcbc"></div>
<div class="abs" style="left:413px;top:1009px;width:1px;height:27px;background:#bcbcbc"></div>
<svg class="abs" style="left:419px;top:986.5px" width="18" height="14" viewBox="0 0 18 14"><path d="M2 1.5 L9 11 L16 1.5" fill="none" stroke="#4a4a4a" stroke-width="3.2"/></svg>
<svg class="abs" style="left:419px;top:1016px" width="18" height="14" viewBox="0 0 18 14"><path d="M2 1.5 L9 11 L16 1.5" fill="none" stroke="#4a4a4a" stroke-width="3.2"/></svg>
<div class="t" style="right:1712.5px;top:985px;font-size:16.5px;font-weight:bold;line-height:18px;color:#111;">相关性</div>
<div id="status" class="abs"></div>
<div class="abs" style="left:807px;top:1047px;width:2px;height:24px;background:linear-gradient(90deg,#c2c2c2,#f6f6f6)"></div>
<div class="abs" style="left:1707px;top:1047px;width:2px;height:24px;background:linear-gradient(90deg,#c2c2c2,#f6f6f6)"></div>
<div class="t" style="left:3px;top:1049px;font-size:16px;line-height:18px;color:#222;letter-spacing:0.3px;">CSYS</div>
<div class="t" style="left:812px;top:1049px;font-size:16px;font-weight:bold;line-height:18px;color:#111;">全部 1</div>
<div id="botstrip" class="abs"></div>
<div class="abs" style="left:456px;top:246px;width:60px;height:798px;background:#e2e2e2;"></div>
<svg class="abs" style="left:0;top:0" width="520" height="1080" viewBox="0 0 520 1080">
<rect x="464" y="252" width="2.2" height="2.2" fill="#9c9c9c"/><rect x="465.2" y="253.2" width="1.6" height="1.6" fill="#fdfdfd"/><rect x="468" y="252" width="2.2" height="2.2" fill="#9c9c9c"/><rect x="469.2" y="253.2" width="1.6" height="1.6" fill="#fdfdfd"/><rect x="472" y="252" width="2.2" height="2.2" fill="#9c9c9c"/><rect x="473.2" y="253.2" width="1.6" height="1.6" fill="#fdfdfd"/><rect x="476" y="252" width="2.2" height="2.2" fill="#9c9c9c"/><rect x="477.2" y="253.2" width="1.6" height="1.6" fill="#fdfdfd"/><rect x="480" y="252" width="2.2" height="2.2" fill="#9c9c9c"/><rect x="481.2" y="253.2" width="1.6" height="1.6" fill="#fdfdfd"/><rect x="484" y="252" width="2.2" height="2.2" fill="#9c9c9c"/><rect x="485.2" y="253.2" width="1.6" height="1.6" fill="#fdfdfd"/><rect x="488" y="252" width="2.2" height="2.2" fill="#9c9c9c"/><rect x="489.2" y="253.2" width="1.6" height="1.6" fill="#fdfdfd"/><rect x="492" y="252" width="2.2" height="2.2" fill="#9c9c9c"/><rect x="493.2" y="253.2" width="1.6" height="1.6" fill="#fdfdfd"/><rect x="496" y="252" width="2.2" height="2.2" fill="#9c9c9c"/><rect x="497.2" y="253.2" width="1.6" height="1.6" fill="#fdfdfd"/><rect x="500" y="252" width="2.2" height="2.2" fill="#9c9c9c"/><rect x="501.2" y="253.2" width="1.6" height="1.6" fill="#fdfdfd"/><rect x="504" y="252" width="2.2" height="2.2" fill="#9c9c9c"/><rect x="505.2" y="253.2" width="1.6" height="1.6" fill="#fdfdfd"/>
<rect x="467.5" y="256.5" width="38" height="38" rx="4" fill="#fdfdfd" stroke="#7a7a7a" stroke-width="1.3"/>
<g transform="translate(486 275)"><rect x="-13" y="-12" width="12" height="13" fill="#dfe6f4" stroke="#3a4a90" stroke-width="1.2"/><path d="M-10 -9 h2 v2 h-2z M-6 -9 h2 v2 h-2z M-10 -5 h2 v2 h-2z M-6 -5 h2 v2 h-2z" fill="#5a6ab8"/><rect x="-6" y="-5" width="12" height="14" fill="#e8eef8" stroke="#3a4a90" stroke-width="1.2"/><path d="M-3 -1 h2 v2 h-2z M1 -1 h2 v2 h-2z M-3 3 h2 v2 h-2z M1 3 h2 v2 h-2z" fill="#5a6ab8"/><path d="M8 2 v12 M8 6.5 h3.5 M8 13.5 h3.5" fill="none" stroke="#1a1a90" stroke-width="1.3"/><rect x="5.5" y="-3" width="5" height="5" fill="#fff" stroke="#1a1a90" stroke-width="1.3"/><rect x="11" y="4" width="5" height="5" fill="#fff" stroke="#1a1a90" stroke-width="1.3"/><rect x="11" y="11" width="5" height="5" fill="#fff" stroke="#1a1a90" stroke-width="1.3"/></g>
<g transform="translate(486 315)"><rect x="-3.5" y="-14" width="6.5" height="11" fill="#555" stroke="#222" stroke-width="0.8"/><rect x="-7" y="-5.5" width="7" height="6.5" fill="#e8a030" stroke="#8a5a10" stroke-width="1"/><rect x="-5" y="-3.5" width="3" height="3" fill="#222"/><path d="M-13 0 h7 v11 l-3.5 5 l-3.5 -5z" fill="url(#gdr)" stroke="#2a3590" stroke-width="0.8"/><line x1="-13" y1="4" x2="-6" y2="8" stroke="#dfe4ff" stroke-width="1.3"/><line x1="-13" y1="9" x2="-6" y2="13" stroke="#dfe4ff" stroke-width="1.3"/><path d="M8 2 v12 M8 6.5 h3.5 M8 13.5 h3.5" fill="none" stroke="#1a1a90" stroke-width="1.3"/><rect x="5.5" y="-3" width="5" height="5" fill="#fff" stroke="#1a1a90" stroke-width="1.3"/><rect x="11" y="4" width="5" height="5" fill="#fff" stroke="#1a1a90" stroke-width="1.3"/><rect x="11" y="11" width="5" height="5" fill="#fff" stroke="#1a1a90" stroke-width="1.3"/></g>
<g transform="translate(486 354)"><path d="M-11 -8 l9 -4 l9 4 v10 l-9 4 l-9 -4z" fill="url(#gbl)" stroke="#3a55b8" stroke-width="1"/><path d="M-11 -8 l9 4 l9 -4 M-2 -4 v10" fill="none" stroke="#3a55b8" stroke-width="0.8"/><circle cx="-9" cy="-1" r="4.5" fill="#f08860" stroke="#c04a30" stroke-width="1"/><circle cx="-9" cy="-1" r="2" fill="#f8c0a0"/><path d="M8 2 v12 M8 6.5 h3.5 M8 13.5 h3.5" fill="none" stroke="#1a1a90" stroke-width="1.3"/><rect x="5.5" y="-3" width="5" height="5" fill="#fff" stroke="#1a1a90" stroke-width="1.3"/><rect x="11" y="4" width="5" height="5" fill="#fff" stroke="#1a1a90" stroke-width="1.3"/><rect x="11" y="11" width="5" height="5" fill="#fff" stroke="#1a1a90" stroke-width="1.3"/></g>
<g transform="translate(486 394)"><rect x="-13" y="-8" width="22" height="15" fill="#dff0ff" stroke="#3a6ab0" stroke-width="1.4"/><path d="M-13 -8 q3.6 6 7.3 0 q3.6 6 7.3 0 q3.6 6 7.4 0" fill="none" stroke="#3a6ab0" stroke-width="1.3"/><path d="M-12 0 q2.5 -3 5 0 q2.5 3 5 0 q2.5 -3 5 0 q2.5 3 5 0 M-12 4 h20" fill="none" stroke="#3a6ab0" stroke-width="1.2"/><path d="M8 2 v12 M8 6.5 h3.5 M8 13.5 h3.5" fill="none" stroke="#1a1a90" stroke-width="1.3"/><rect x="5.5" y="-3" width="5" height="5" fill="#fff" stroke="#1a1a90" stroke-width="1.3"/><rect x="11" y="4" width="5" height="5" fill="#fff" stroke="#1a1a90" stroke-width="1.3"/><rect x="11" y="11" width="5" height="5" fill="#fff" stroke="#1a1a90" stroke-width="1.3"/></g>
<g transform="translate(486 434)"><line x1="-10" y1="-10" x2="-10" y2="10" stroke="#222" stroke-width="1"/><rect x="-13" y="-13" width="6" height="6" fill="#fff" stroke="#222" stroke-width="1.2"/><line x1="-11.5" y1="-10" x2="-8.5" y2="-10" stroke="#222" stroke-width="1.2"/><line x1="-7" y1="-10" x2="-3" y2="-10" stroke="#222" stroke-width="1"/><line x1="-10" y1="-11.5" x2="-10" y2="-8.5" stroke="#222" stroke-width="1.2"/><rect x="-13" y="-3" width="6" height="6" fill="#fff" stroke="#222" stroke-width="1.2"/><line x1="-11.5" y1="0" x2="-8.5" y2="0" stroke="#222" stroke-width="1.2"/><line x1="-7" y1="0" x2="-3" y2="0" stroke="#222" stroke-width="1"/><line x1="-10" y1="-1.5" x2="-10" y2="1.5" stroke="#222" stroke-width="1.2"/><rect x="-13" y="7" width="6" height="6" fill="#fff" stroke="#222" stroke-width="1.2"/><line x1="-11.5" y1="10" x2="-8.5" y2="10" stroke="#222" stroke-width="1.2"/><line x1="-7" y1="10" x2="-3" y2="10" stroke="#222" stroke-width="1"/><line x1="-10" y1="8.5" x2="-10" y2="11.5" stroke="#222" stroke-width="1.2"/><path d="M-2 -12 q5 -2 7 3 l-3 1 q-2 -3 -4 -2z" fill="#f08030"/><path d="M-2 -2 q5 -2 7 3 l-3 1 q-2 -3 -4 -2z" fill="#f08030"/><rect x="-1" y="6" width="4" height="8" fill="url(#gdr)" rx="1"/><line x1="3" y1="9" x2="10" y2="7" stroke="#555" stroke-width="1"/></g>
<g transform="translate(486 473.5)"><line x1="-10" y1="-10" x2="-10" y2="10" stroke="#222" stroke-width="1"/><rect x="-13" y="-13" width="6" height="6" fill="#fff" stroke="#222" stroke-width="1.2"/><line x1="-11.5" y1="-10" x2="-8.5" y2="-10" stroke="#222" stroke-width="1.2"/><line x1="-7" y1="-10" x2="-3" y2="-10" stroke="#222" stroke-width="1"/><rect x="-13" y="-3" width="6" height="6" fill="#fff" stroke="#222" stroke-width="1.2"/><line x1="-11.5" y1="0" x2="-8.5" y2="0" stroke="#222" stroke-width="1.2"/><line x1="-7" y1="0" x2="-3" y2="0" stroke="#222" stroke-width="1"/><rect x="-13" y="7" width="6" height="6" fill="#fff" stroke="#222" stroke-width="1.2"/><line x1="-11.5" y1="10" x2="-8.5" y2="10" stroke="#222" stroke-width="1.2"/><line x1="-7" y1="10" x2="-3" y2="10" stroke="#222" stroke-width="1"/><path d="M-2 -12 q5 -2 7 3 l-3 1 q-2 -3 -4 -2z" fill="#f08030"/><path d="M-2 -2 q5 -2 7 3 l-3 1 q-2 -3 -4 -2z" fill="#f08030"/><rect x="-1" y="6" width="4" height="8" fill="url(#gdr)" rx="1"/><line x1="3" y1="9" x2="10" y2="7" stroke="#555" stroke-width="1"/></g>
<path d="M471 498.5 v7 l-4 -3.5z" fill="#111"/>
<rect x="459" y="512" width="56" height="1" fill="#c0c0c0"/><rect x="459" y="513" width="56" height="1" fill="#f4f4f4"/>
<rect x="464" y="519" width="2.2" height="2.2" fill="#9c9c9c"/><rect x="465.2" y="520.2" width="1.6" height="1.6" fill="#fdfdfd"/><rect x="468" y="519" width="2.2" height="2.2" fill="#9c9c9c"/><rect x="469.2" y="520.2" width="1.6" height="1.6" fill="#fdfdfd"/><rect x="472" y="519" width="2.2" height="2.2" fill="#9c9c9c"/><rect x="473.2" y="520.2" width="1.6" height="1.6" fill="#fdfdfd"/><rect x="476" y="519" width="2.2" height="2.2" fill="#9c9c9c"/><rect x="477.2" y="520.2" width="1.6" height="1.6" fill="#fdfdfd"/><rect x="480" y="519" width="2.2" height="2.2" fill="#9c9c9c"/><rect x="481.2" y="520.2" width="1.6" height="1.6" fill="#fdfdfd"/><rect x="484" y="519" width="2.2" height="2.2" fill="#9c9c9c"/><rect x="485.2" y="520.2" width="1.6" height="1.6" fill="#fdfdfd"/><rect x="488" y="519" width="2.2" height="2.2" fill="#9c9c9c"/><rect x="489.2" y="520.2" width="1.6" height="1.6" fill="#fdfdfd"/><rect x="492" y="519" width="2.2" height="2.2" fill="#9c9c9c"/><rect x="493.2" y="520.2" width="1.6" height="1.6" fill="#fdfdfd"/><rect x="496" y="519" width="2.2" height="2.2" fill="#9c9c9c"/><rect x="497.2" y="520.2" width="1.6" height="1.6" fill="#fdfdfd"/><rect x="500" y="519" width="2.2" height="2.2" fill="#9c9c9c"/><rect x="501.2" y="520.2" width="1.6" height="1.6" fill="#fdfdfd"/><rect x="504" y="519" width="2.2" height="2.2" fill="#9c9c9c"/><rect x="505.2" y="520.2" width="1.6" height="1.6" fill="#fdfdfd"/>
<g transform="translate(486 542)"><rect x="-11" y="-13" width="8.3" height="21.5" fill="url(#gdr)" rx="2.2"/><line x1="-10.7" y1="-9.5" x2="-3" y2="-7.5" stroke="#26318a" stroke-width="1.1"/><line x1="-10.7" y1="-5.3" x2="-3" y2="-3.3" stroke="#26318a" stroke-width="1.1"/><line x1="-10.7" y1="-1.1" x2="-3" y2="0.9" stroke="#26318a" stroke-width="1.1"/><line x1="-10.7" y1="3.1" x2="-3" y2="5.1" stroke="#26318a" stroke-width="1.1"/><ellipse cx="-6.8" cy="-11.8" rx="3.9" ry="1.6" fill="#b4bef4"/><path d="M-2.5 -5 l17 -4.5 v2.4 l-17 4.5z M-2.5 -0.4 l14 -3.8 v2.4 l-14 3.8z M-2.5 4.2 l10 -2.8 v2.4 l-10 2.8z" fill="#555a74"/><path d="M-12 10.5 l5 -1.5 l5 1.5 l-5 1.5z M-7 8.5 v5 M-10.5 9 l7 3 M-3.5 9 l-7 3" fill="#e8d848" stroke="#d8c838" stroke-width="0.8"/></g>
<g transform="translate(486 584)"><rect x="-11" y="-13" width="8.3" height="21.5" fill="url(#gdr)" rx="2.2"/><line x1="-10.7" y1="-9.5" x2="-3" y2="-7.5" stroke="#26318a" stroke-width="1.1"/><line x1="-10.7" y1="-5.3" x2="-3" y2="-3.3" stroke="#26318a" stroke-width="1.1"/><line x1="-10.7" y1="-1.1" x2="-3" y2="0.9" stroke="#26318a" stroke-width="1.1"/><line x1="-10.7" y1="3.1" x2="-3" y2="5.1" stroke="#26318a" stroke-width="1.1"/><ellipse cx="-6.8" cy="-11.8" rx="3.9" ry="1.6" fill="#b4bef4"/><path d="M-2.5 -5 l17 -4.5 v2.4 l-17 4.5z M-2.5 -0.4 l14 -3.8 v2.4 l-14 3.8z M-2.5 4.2 l10 -2.8 v2.4 l-10 2.8z" fill="#555a74"/><path d="M-12 10.5 l5 -1.5 l5 1.5 l-5 1.5z M-7 8.5 v5 M-10.5 9 l7 3 M-3.5 9 l-7 3" fill="#e8d848" stroke="#d8c838" stroke-width="0.8"/><rect x="-1" y="1" width="15" height="12" fill="url(#gbl)" stroke="#1a2a70" stroke-width="1.6" rx="2.5"/></g>
<g transform="translate(486 621.5)"><path d="M-12 -10 h6 v6 h-6 v6 h6 v6 h-6" fill="none" stroke="#a8a8a8" stroke-width="2"/><path d="M-3 10 L8 -1" fill="none" stroke="#a4a4a4" stroke-width="4.5" stroke-linecap="round"/><circle cx="9" cy="-4" r="4.5" fill="#a4a4a4"/><circle cx="11" cy="-6" r="2.3" fill="#dedede"/></g>
<g transform="translate(486 661.5)"><path d="M-12 -12 h6 v6 h-6 v6 h6 v6 h-6" fill="none" stroke="#444" stroke-width="1.6" stroke-dasharray="2 1.2"/><path d="M-4 -12 L12 2 M10 -12 L-3 2" fill="none" stroke="#111" stroke-width="2.2"/><path d="M2 3 q10 -1 9 6 q-1 5 -8 4" fill="none" stroke="#111" stroke-width="2.2"/><path d="M-1 3 l6 -3 v6.5z" fill="#111"/></g>
<g transform="translate(486 700.5)"><path d="M-12 -12 h7 v6 h-7 v6 h7 v6 h-7" fill="none" stroke="#111" stroke-width="2.2"/><path d="M1 3 q10 -2 9 6" fill="none" stroke="#111" stroke-width="2.2"/><path d="M6 8 h8 l-4 5z" fill="#111"/></g>
<g transform="translate(486 742)"><path d="M-13 -9 l4 5 l7 -10" fill="none" stroke="#1fae3a" stroke-width="3"/><path d="M-10 -2 l6 3 v5 l8 2 l8 -4 v-6 l4 2 v9 l-12 6 l-14 -5z" fill="#f8d840" stroke="#b8901a" stroke-width="0.9"/><path d="M-4 1 l8 2 l8 -4" fill="none" stroke="#e06030" stroke-width="1.2"/><rect x="0" y="-12" width="6" height="15" fill="url(#gdr)" rx="1.2"/><line x1="0" y1="-8" x2="6" y2="-6.5" stroke="#2a3590" stroke-width="1"/><line x1="0" y1="-4" x2="6" y2="-2.5" stroke="#2a3590" stroke-width="1"/></g>
<g transform="translate(486 782)"><path d="M-13 -9 l4 5 l7 -10" fill="none" stroke="#1fae3a" stroke-width="3"/><path d="M-13 4 l12 -7 l14 6 l-12 8z" fill="#5a80e0" stroke="#2a4ab0" stroke-width="1"/><path d="M-9 4 q6 -6 14 -1" fill="none" stroke="#e04040" stroke-width="2"/><path d="M-13 4 v3 l14 8 l12 -8 v-3" fill="#c8d4f0" stroke="#2a4ab0" stroke-width="0.8"/><rect x="-2" y="-13" width="6" height="13" fill="url(#gdr)" rx="1.2"/><line x1="-2" y1="-9" x2="4" y2="-7.5" stroke="#2a3590" stroke-width="1"/><line x1="-2" y1="-5" x2="4" y2="-3.5" stroke="#2a3590" stroke-width="1"/></g>
<g transform="translate(486 823)"><path d="M-14 2 l11 -6 l13 5 l-11 7z" fill="#5a80e0" stroke="#2a4ab0" stroke-width="1"/><path d="M-11 2 q6 -5 13 -1" fill="none" stroke="#e04040" stroke-width="2"/><rect x="-4" y="-14" width="6" height="14" fill="url(#gdr)" rx="1.2"/><line x1="-4" y1="-10" x2="2" y2="-8.5" stroke="#2a3590" stroke-width="1"/><line x1="-4" y1="-6" x2="2" y2="-4.5" stroke="#2a3590" stroke-width="1"/><path d="M1 1 h9 l4 4 v9 h-13z" fill="#f4f4ff" stroke="#5a68b8" stroke-width="1.1"/><line x1="3" y1="7" x2="11" y2="7" stroke="#555" stroke-width="1"/><line x1="3" y1="10" x2="11" y2="10" stroke="#555" stroke-width="1"/><path d="M-6 5 l6 4" fill="none" stroke="#e05020" stroke-width="1.6"/></g>
<g transform="translate(486 864.5)"><path d="M-13 -10 l4 5 l7 -10" fill="none" stroke="#1fae3a" stroke-width="3"/><rect x="-12" y="-5" width="19" height="15" fill="#e4e4e4" stroke="#888" stroke-width="1.2"/><rect x="-9" y="-2" width="9" height="9" fill="#c8d8f0" stroke="#5a78b8" stroke-width="1"/><path d="M-6 0 q3 -2 4 2" fill="none" stroke="#e04040" stroke-width="1"/><rect x="7" y="-3" width="4" height="12" fill="#c8c8c8" stroke="#888" stroke-width="0.8"/><path d="M8 12 v-6 h6" fill="none" stroke="#555" stroke-width="1.6"/><path d="M-12 10 h19" fill="none" stroke="#666" stroke-width="1.6"/></g>
<rect x="459" y="884" width="56" height="1" fill="#c0c0c0"/><rect x="459" y="885" width="56" height="1" fill="#f4f4f4"/>
<g transform="translate(486 908.5)"><rect x="-8" y="-13" width="6" height="21" fill="url(#gdg)" rx="1"/><path d="M-11 10 l6 -3 l6 3 l-6 3z" fill="#c4c4c4"/><path d="M0 4 h8" fill="none" stroke="#9a9a9a" stroke-width="2.4" stroke-dasharray="2.4 1.2"/><path d="M7 0 l6 4 l-6 4z" fill="#9a9a9a"/></g>
<path d="M471 962.5 v7 l-4 -3.5z" fill="#111"/>
<path d="M501.5 961 l3 3 l3 -3 M501.5 965.5 l3 3 l3 -3" fill="none" stroke="#111" stroke-width="1.5"/>
<rect x="459" y="976" width="56" height="1" fill="#c0c0c0"/><rect x="459" y="977" width="56" height="1" fill="#f4f4f4"/>
<rect x="464" y="983.5" width="2.2" height="2.2" fill="#9c9c9c"/><rect x="465.2" y="984.7" width="1.6" height="1.6" fill="#fdfdfd"/><rect x="468" y="983.5" width="2.2" height="2.2" fill="#9c9c9c"/><rect x="469.2" y="984.7" width="1.6" height="1.6" fill="#fdfdfd"/><rect x="472" y="983.5" width="2.2" height="2.2" fill="#9c9c9c"/><rect x="473.2" y="984.7" width="1.6" height="1.6" fill="#fdfdfd"/><rect x="476" y="983.5" width="2.2" height="2.2" fill="#9c9c9c"/><rect x="477.2" y="984.7" width="1.6" height="1.6" fill="#fdfdfd"/><rect x="480" y="983.5" width="2.2" height="2.2" fill="#9c9c9c"/><rect x="481.2" y="984.7" width="1.6" height="1.6" fill="#fdfdfd"/><rect x="484" y="983.5" width="2.2" height="2.2" fill="#9c9c9c"/><rect x="485.2" y="984.7" width="1.6" height="1.6" fill="#fdfdfd"/><rect x="488" y="983.5" width="2.2" height="2.2" fill="#9c9c9c"/><rect x="489.2" y="984.7" width="1.6" height="1.6" fill="#fdfdfd"/><rect x="492" y="983.5" width="2.2" height="2.2" fill="#9c9c9c"/><rect x="493.2" y="984.7" width="1.6" height="1.6" fill="#fdfdfd"/><rect x="496" y="983.5" width="2.2" height="2.2" fill="#9c9c9c"/><rect x="497.2" y="984.7" width="1.6" height="1.6" fill="#fdfdfd"/><rect x="500" y="983.5" width="2.2" height="2.2" fill="#9c9c9c"/><rect x="501.2" y="984.7" width="1.6" height="1.6" fill="#fdfdfd"/><rect x="504" y="983.5" width="2.2" height="2.2" fill="#9c9c9c"/><rect x="505.2" y="984.7" width="1.6" height="1.6" fill="#fdfdfd"/>
<defs><linearGradient id="gsv" x1="0" y1="0" x2="0" y2="1"><stop offset="0" stop-color="#5a7a88"/><stop offset="0.35" stop-color="#f0f8fc"/><stop offset="0.7" stop-color="#9ab0bc"/><stop offset="1" stop-color="#4a6470"/></linearGradient></defs>
<g transform="translate(479 1007)"><path d="M-12 -9 q4 1 6 5 h15 v9 h-15 q-2 4 -6 5z" fill="url(#gsv)" stroke="#5a707c" stroke-width="0.8"/><ellipse cx="-12" cy="0.5" rx="2.5" ry="9.5" fill="#c8d8e0" stroke="#5a707c" stroke-width="0.8"/></g>
<path d="M502 1004 h7 l-3.5 4z" fill="#111"/>
<path d="M471 1030.5 v7 l-4 -3.5z" fill="#111"/>
</svg>
<div class="abs" style="left:516px;top:245px;width:1212px;height:799px;background:#000;"></div>
<svg class="abs" style="left:0;top:0" width="1728" height="1080" viewBox="0 0 1728 1080">
<defs>
<linearGradient id="hg" x1="0" y1="0.2" x2="1" y2="0.8"><stop offset="0" stop-color="#00454a"/><stop offset="0.55" stop-color="#00565a"/><stop offset="1" stop-color="#006e72"/></linearGradient>
<linearGradient id="wg" x1="0" y1="1" x2="1" y2="0"><stop offset="0" stop-color="#007478"/><stop offset="1" stop-color="#006064"/></linearGradient>
<linearGradient id="fg" x1="0" y1="0" x2="1" y2="0"><stop offset="0" stop-color="#003f42"/><stop offset="1" stop-color="#004448"/></linearGradient>
</defs>
<g id="model">
<polygon points="823,354.5 1541,479 1282,757 564.4,632.2" fill="#028d8b"/>
<polygon points="564.4,632.2 1282,757 1292,857 574,733.5" fill="url(#fg)"/>
<polygon points="1541,479 1551.5,577 1292,857 1282,757" fill="#007a7b"/>
<polygon points="826,492.7 1359.3,582.7 1288.8,662.8 1287.3,665.3 1280.3,667.9 1222.8,659.2 1198.5,687.1 1136.6,676.6 1134.9,667 1115.7,662.7 1112.3,639.2 875.7,598.3 848.9,627.1 788.1,615.7 788,605.4 767,602.8 764.5,579.3 755,575.4" fill="#028987" stroke="#00666a" stroke-width="1"/>
<polygon points="846,414.4 1414.2,511.3 1421,512.5 1424.6,516.5 1402.9,534 849.6,440.5" fill="#003f43"/>
<polygon points="831.3,466.6 1381.1,560.1 1359.3,582.7 826,492.7" fill="#003f43"/>
<polygon points="846,414.4 866,417.8 868,443.6 849.6,440.5" fill="#00686c"/>
<polygon points="831.3,466.6 846,469.1 843,495.6 826,492.7" fill="#006468"/>
<polygon points="846,414.4 849.6,440.5 831.3,466.6 826,492.7 755,575.4 715,570.5 706,566.2 822.6,442.2" fill="url(#wg)"/>
<polygon points="764.5,579.3 690.6,657.5 695,681 767.2,602.6" fill="#007074"/>
<polygon points="767.2,602.6 695,681 714.1,684.5 788,605.4" fill="#028987"/>
<polygon points="788,605.4 714.1,684.5 719.3,694.9 788.8,617" fill="#00666a"/>
<polygon points="788.8,617 719.3,694.9 786.4,705.4 787.2,697.5 803.8,700.1 804.6,677.5 873.3,601.9 848.9,627.1" fill="#028987"/>
<polyline points="788.8,616.5 848.9,627.1 793.3,691.4 787.2,697.5" fill="none" stroke="#00666a" stroke-width="1"/>
<polygon points="875.7,598.3 1112.3,639.2 1041.1,714.9 804.6,677.5" fill="#028d8b" stroke="#00666a" stroke-width="1"/>
<polygon points="1112.3,639.2 1041.1,714.9 1042.9,737.5 1115.7,661.5" fill="#007074"/>
<polygon points="1115.7,662.2 1134.9,667 1064.4,744.8 1042.9,738" fill="#028987"/>
<polygon points="1134.9,667 1136.6,676.6 1066.1,755 1064.4,744.8" fill="#00666a"/>
<polygon points="1136.6,676.6 1198.5,687.1 1222.8,659.2 1153.2,737.6 1154,760.2 1134.9,757.6 1134.9,767.2 1066.1,755" fill="#028987"/>
<polyline points="1136.6,676.6 1198.5,687.1 1136.6,756.7" fill="none" stroke="#00666a" stroke-width="1"/>
<polyline points="1153.2,737.6 1222.8,659.2 1280.3,667.9 1287.3,665.3 1288.8,662.8 1424,514" fill="none" stroke="#00666a" stroke-width="1"/>
<ellipse cx="839.5" cy="386.2" rx="29" ry="15" fill="url(#hg)" transform="rotate(-6 839.5 386.2)"/>
<ellipse cx="1475.8" cy="498.5" rx="29" ry="15" fill="url(#hg)" transform="rotate(-6 1475.8 498.5)"/>
<ellipse cx="627.3" cy="615.6" rx="29" ry="15" fill="url(#hg)" transform="rotate(-6 627.3 615.6)"/>
<ellipse cx="1263.9" cy="725.4" rx="29" ry="15" fill="url(#hg)" transform="rotate(-6 1263.9 725.4)"/>
<ellipse cx="795.5" cy="423.2" rx="17.8" ry="9.8" fill="#3f9a9c" transform="rotate(-6 795.5 423.2)"/>
<ellipse cx="795.8" cy="424.2" rx="16.4" ry="8.1" fill="url(#hg)" transform="rotate(-6 795.5 423.2)"/>
<ellipse cx="722.3" cy="501.3" rx="17.8" ry="9.8" fill="#3f9a9c" transform="rotate(-6 722.3 501.3)"/>
<ellipse cx="722.5999999999999" cy="502.3" rx="16.4" ry="8.1" fill="url(#hg)" transform="rotate(-6 722.3 501.3)"/>
<ellipse cx="653" cy="576.2" rx="17.8" ry="9.8" fill="#3f9a9c" transform="rotate(-6 653 576.2)"/>
<ellipse cx="653.3" cy="577.2" rx="16.4" ry="8.1" fill="url(#hg)" transform="rotate(-6 653 576.2)"/>
<ellipse cx="1451.4" cy="536.3" rx="17.8" ry="9.8" fill="#3f9a9c" transform="rotate(-6 1451.4 536.3)"/>
<ellipse cx="1451.7" cy="537.3" rx="16.4" ry="8.1" fill="url(#hg)" transform="rotate(-6 1451.4 536.3)"/>
<ellipse cx="1378.3" cy="615.4" rx="17.8" ry="9.8" fill="#3f9a9c" transform="rotate(-6 1378.3 615.4)"/>
<ellipse cx="1378.6" cy="616.4" rx="16.4" ry="8.1" fill="url(#hg)" transform="rotate(-6 1378.3 615.4)"/>
<ellipse cx="1308.9" cy="690.2" rx="17.8" ry="9.8" fill="#3f9a9c" transform="rotate(-6 1308.9 690.2)"/>
<ellipse cx="1309.2" cy="691.2" rx="16.4" ry="8.1" fill="url(#hg)" transform="rotate(-6 1308.9 690.2)"/>
<ellipse cx="921.8" cy="411.9" rx="15.5" ry="8.2" fill="url(#hg)" transform="rotate(-6 921.8 411.9)"/>
<ellipse cx="985.2" cy="403.8" rx="15.5" ry="8.2" fill="url(#hg)" transform="rotate(-6 985.2 403.8)"/>
<ellipse cx="1093.3" cy="422" rx="15.5" ry="8.2" fill="url(#hg)" transform="rotate(-6 1093.3 422)"/>
<ellipse cx="1147.8" cy="451.9" rx="15.5" ry="8.2" fill="url(#hg)" transform="rotate(-6 1147.8 451.9)"/>
<ellipse cx="1236.5" cy="447.3" rx="15.5" ry="8.2" fill="url(#hg)" transform="rotate(-6 1236.5 447.3)"/>
<ellipse cx="1344.6" cy="465.9" rx="15.5" ry="8.2" fill="url(#hg)" transform="rotate(-6 1344.6 465.9)"/>
<ellipse cx="1375.8" cy="490.6" rx="15.5" ry="8.2" fill="url(#hg)" transform="rotate(-6 1375.8 490.6)"/>
<ellipse cx="876.1" cy="458.3" rx="17" ry="9.5" fill="url(#hg)" transform="rotate(-6 876.1 458.3)"/>
<ellipse cx="948.2" cy="472.4" rx="17" ry="9.5" fill="url(#hg)" transform="rotate(-6 948.2 472.4)"/>
<ellipse cx="1019.5" cy="484.2" rx="17" ry="9.5" fill="url(#hg)" transform="rotate(-6 1019.5 484.2)"/>
<ellipse cx="1091.3" cy="496" rx="17" ry="9.5" fill="url(#hg)" transform="rotate(-6 1091.3 496)"/>
<ellipse cx="1162.6" cy="508.9" rx="17" ry="9.5" fill="url(#hg)" transform="rotate(-6 1162.6 508.9)"/>
<ellipse cx="1234.7" cy="521.9" rx="17" ry="9.5" fill="url(#hg)" transform="rotate(-6 1234.7 521.9)"/>
<ellipse cx="1306.1" cy="534.2" rx="17" ry="9.5" fill="url(#hg)" transform="rotate(-6 1306.1 534.2)"/>
<ellipse cx="1378.3" cy="546.5" rx="17" ry="9.5" fill="url(#hg)" transform="rotate(-6 1378.3 546.5)"/>
<ellipse cx="828" cy="504.4" rx="4" ry="2.8" fill="#085358"/>
<ellipse cx="855.9" cy="509.6" rx="4" ry="2.8" fill="#085358"/>
<ellipse cx="882.9" cy="514" rx="4" ry="2.8" fill="#085358"/>
<ellipse cx="899.7" cy="516.9" rx="4" ry="2.8" fill="#085358"/>
<ellipse cx="926.9" cy="521.8" rx="4" ry="2.8" fill="#085358"/>
<ellipse cx="971.5" cy="529.4" rx="4" ry="2.8" fill="#085358"/>
<ellipse cx="1026.3" cy="538.8" rx="4" ry="2.8" fill="#085358"/>
<ellipse cx="1042.8" cy="541.7" rx="4" ry="2.8" fill="#085358"/>
<ellipse cx="1070.7" cy="546.6" rx="4" ry="2.8" fill="#085358"/>
<ellipse cx="1098.6" cy="551.4" rx="4" ry="2.8" fill="#085358"/>
<ellipse cx="1114.6" cy="554.1" rx="4" ry="2.8" fill="#085358"/>
<ellipse cx="1142.3" cy="559.1" rx="4" ry="2.8" fill="#085358"/>
<ellipse cx="1170.7" cy="564" rx="4" ry="2.8" fill="#085358"/>
<ellipse cx="1186.7" cy="566.6" rx="4" ry="2.8" fill="#085358"/>
<ellipse cx="1214.7" cy="571.3" rx="4" ry="2.8" fill="#085358"/>
<ellipse cx="1241.9" cy="576.2" rx="4" ry="2.8" fill="#085358"/>
<ellipse cx="1258" cy="579.3" rx="4" ry="2.8" fill="#085358"/>
<ellipse cx="1286.2" cy="584" rx="4" ry="2.8" fill="#085358"/>
<ellipse cx="1314.1" cy="588.8" rx="4" ry="2.8" fill="#085358"/>
<ellipse cx="1330.2" cy="591.4" rx="4" ry="2.8" fill="#085358"/>
<ellipse cx="801.9" cy="531.9" rx="4" ry="2.8" fill="#085358"/>
<ellipse cx="829.4" cy="537.1" rx="4" ry="2.8" fill="#085358"/>
<ellipse cx="857.3" cy="541.8" rx="4" ry="2.8" fill="#085358"/>
<ellipse cx="873.6" cy="544.8" rx="4" ry="2.8" fill="#085358"/>
<ellipse cx="901.1" cy="549.7" rx="4" ry="2.8" fill="#085358"/>
<ellipse cx="929" cy="554.5" rx="4" ry="2.8" fill="#085358"/>
<ellipse cx="945" cy="557.5" rx="4" ry="2.8" fill="#085358"/>
<ellipse cx="973.3" cy="562.2" rx="4" ry="2.8" fill="#085358"/>
<ellipse cx="1001" cy="566.6" rx="4" ry="2.8" fill="#085358"/>
<ellipse cx="1017" cy="569.5" rx="4" ry="2.8" fill="#085358"/>
<ellipse cx="1044.7" cy="574.3" rx="4" ry="2.8" fill="#085358"/>
<ellipse cx="1072.8" cy="579.7" rx="4" ry="2.8" fill="#085358"/>
<ellipse cx="1088.9" cy="582.3" rx="4" ry="2.8" fill="#085358"/>
<ellipse cx="1116.7" cy="587" rx="4" ry="2.8" fill="#085358"/>
<ellipse cx="1144.6" cy="591.5" rx="4" ry="2.8" fill="#085358"/>
<ellipse cx="1161.1" cy="594.4" rx="4" ry="2.8" fill="#085358"/>
<ellipse cx="1188.6" cy="599.7" rx="4" ry="2.8" fill="#085358"/>
<ellipse cx="1216" cy="604" rx="4" ry="2.8" fill="#085358"/>
<ellipse cx="1232.5" cy="607.1" rx="4" ry="2.8" fill="#085358"/>
<ellipse cx="1260.2" cy="611.8" rx="4" ry="2.8" fill="#085358"/>
<ellipse cx="1288" cy="616.8" rx="4" ry="2.8" fill="#085358"/>
<ellipse cx="1304" cy="619.4" rx="4" ry="2.8" fill="#085358"/>
<ellipse cx="816.2" cy="551.4" rx="4" ry="2.8" fill="#085358"/>
<ellipse cx="793.2" cy="576.1" rx="4" ry="2.8" fill="#085358"/>
<ellipse cx="783.6" cy="587.1" rx="4" ry="2.8" fill="#085358"/>
<ellipse cx="810.9" cy="591.4" rx="4" ry="2.8" fill="#085358"/>
<ellipse cx="827.1" cy="594.6" rx="4" ry="2.8" fill="#085358"/>
<ellipse cx="855" cy="599.3" rx="4" ry="2.8" fill="#085358"/>
<ellipse cx="1031" cy="589.2" rx="4" ry="2.8" fill="#085358"/>
<ellipse cx="1102.8" cy="601.5" rx="4" ry="2.8" fill="#085358"/>
<ellipse cx="1188" cy="600.9" rx="4" ry="2.8" fill="#085358"/>
<ellipse cx="1007.9" cy="614" rx="4" ry="2.8" fill="#085358"/>
<ellipse cx="1080.6" cy="626.1" rx="4" ry="2.8" fill="#085358"/>
<ellipse cx="1142.4" cy="649.2" rx="4" ry="2.8" fill="#085358"/>
<ellipse cx="1169.7" cy="654.2" rx="4" ry="2.8" fill="#085358"/>
<ellipse cx="1186.4" cy="657" rx="4" ry="2.8" fill="#085358"/>
<ellipse cx="1214.1" cy="661.6" rx="4" ry="2.8" fill="#085358"/>
<ellipse cx="1115" cy="644.1" rx="4" ry="2.8" fill="#085358"/>
<ellipse cx="827.7" cy="520.9" rx="4.1" ry="2.9" fill="#8a2a56"/>
<ellipse cx="858" cy="526.1" rx="4.1" ry="2.9" fill="#8a2a56"/>
<ellipse cx="899" cy="532.2" rx="4.1" ry="2.9" fill="#8a2a56"/>
<ellipse cx="929.9" cy="538" rx="4.1" ry="2.9" fill="#8a2a56"/>
<ellipse cx="970.2" cy="545.7" rx="4.1" ry="2.9" fill="#8a2a56"/>
<ellipse cx="999.6" cy="551" rx="4.1" ry="2.9" fill="#8a2a56"/>
<ellipse cx="1043" cy="557.5" rx="4.1" ry="2.9" fill="#8a2a56"/>
<ellipse cx="1073.3" cy="563.2" rx="4.1" ry="2.9" fill="#8a2a56"/>
<ellipse cx="1114.6" cy="570.4" rx="4.1" ry="2.9" fill="#8a2a56"/>
<ellipse cx="1144.6" cy="575.8" rx="4.1" ry="2.9" fill="#8a2a56"/>
<ellipse cx="1185.8" cy="582.8" rx="4.1" ry="2.9" fill="#8a2a56"/>
<ellipse cx="1216.7" cy="588" rx="4.1" ry="2.9" fill="#8a2a56"/>
<ellipse cx="1257" cy="595.5" rx="4.1" ry="2.9" fill="#8a2a56"/>
<ellipse cx="1288.4" cy="600.9" rx="4.1" ry="2.9" fill="#8a2a56"/>
<ellipse cx="1329.1" cy="607.7" rx="4.1" ry="2.9" fill="#8a2a56"/>
<ellipse cx="789.3" cy="561" rx="4.1" ry="2.9" fill="#8a2a56"/>
<ellipse cx="820.2" cy="566.5" rx="4.1" ry="2.9" fill="#8a2a56"/>
<ellipse cx="861.1" cy="573.7" rx="4.1" ry="2.9" fill="#8a2a56"/>
<ellipse cx="891.6" cy="579.3" rx="4.1" ry="2.9" fill="#8a2a56"/>
<ellipse cx="932.8" cy="586.6" rx="4.1" ry="2.9" fill="#8a2a56"/>
<ellipse cx="963.8" cy="591.7" rx="4.1" ry="2.9" fill="#8a2a56"/>
<ellipse cx="1004.4" cy="598.8" rx="4.1" ry="2.9" fill="#8a2a56"/>
<ellipse cx="1034.9" cy="604" rx="4.1" ry="2.9" fill="#8a2a56"/>
<ellipse cx="1076.4" cy="611.1" rx="4.1" ry="2.9" fill="#8a2a56"/>
<ellipse cx="1107" cy="616.4" rx="4.1" ry="2.9" fill="#8a2a56"/>
<ellipse cx="1148" cy="624" rx="4.1" ry="2.9" fill="#8a2a56"/>
<ellipse cx="1178.4" cy="628.8" rx="4.1" ry="2.9" fill="#8a2a56"/>
<ellipse cx="1219.8" cy="635.6" rx="4.1" ry="2.9" fill="#8a2a56"/>
<ellipse cx="1250.5" cy="641.8" rx="4.1" ry="2.9" fill="#8a2a56"/>
<ellipse cx="1291.7" cy="648.5" rx="4.1" ry="2.9" fill="#8a2a56"/>
<ellipse cx="785.3" cy="604" rx="4.1" ry="2.9" fill="#8a2a56"/>
<ellipse cx="826.3" cy="611.5" rx="4.1" ry="2.9" fill="#8a2a56"/>
<ellipse cx="855.9" cy="616.2" rx="4.1" ry="2.9" fill="#8a2a56"/>
<ellipse cx="1115.8" cy="660.4" rx="4.1" ry="2.9" fill="#8a2a56"/>
<ellipse cx="1144.5" cy="666.4" rx="4.1" ry="2.9" fill="#8a2a56"/>
<ellipse cx="1184.5" cy="673.8" rx="4.1" ry="2.9" fill="#8a2a56"/>
<ellipse cx="767.2" cy="616.6" rx="4.6" ry="3.4" fill="#0c4a2c"/>
<path d="M762.9000000000001 618.0 a4.8 3.6 0 0 0 9 -1.5" fill="none" stroke="#8ee84a" stroke-width="1.3"/>
<ellipse cx="741.1" cy="643.6" rx="4.6" ry="3.4" fill="#0c4a2c"/>
<path d="M736.8000000000001 645.0 a4.8 3.6 0 0 0 9 -1.5" fill="none" stroke="#8ee84a" stroke-width="1.3"/>
<ellipse cx="715" cy="672.3" rx="4.6" ry="3.4" fill="#0c4a2c"/>
<path d="M710.7 673.6999999999999 a4.8 3.6 0 0 0 9 -1.5" fill="none" stroke="#8ee84a" stroke-width="1.3"/>
<ellipse cx="1115" cy="676.4" rx="4.6" ry="3.4" fill="#0c4a2c"/>
<path d="M1110.7 677.8 a4.8 3.6 0 0 0 9 -1.5" fill="none" stroke="#8ee84a" stroke-width="1.3"/>
<ellipse cx="1089.3" cy="704.5" rx="4.6" ry="3.4" fill="#0c4a2c"/>
<path d="M1085.0 705.9 a4.8 3.6 0 0 0 9 -1.5" fill="none" stroke="#8ee84a" stroke-width="1.3"/>
<ellipse cx="1063.6" cy="732.3" rx="4.6" ry="3.4" fill="#0c4a2c"/>
<path d="M1059.3 733.6999999999999 a4.8 3.6 0 0 0 9 -1.5" fill="none" stroke="#8ee84a" stroke-width="1.3"/>
<ellipse cx="958.4" cy="657.5" rx="24.6" ry="12.4" fill="#3f8f92" transform="rotate(-5 958.4 657.5)"/>
<ellipse cx="958.7" cy="658.4" rx="23.4" ry="11.2" fill="#0b4a50" transform="rotate(-5 958.4 657.5)"/>
<path d="M946 657.5 q4 -2.6 9 -1.6 M964.5 655.6 q5 0 8.5 2.4" fill="none" stroke="#6fe04a" stroke-width="1.3"/>
<ellipse cx="1467.3" cy="626" rx="3" ry="5.8" fill="#4aacae" transform="rotate(12 1467.3 626)"/>
<ellipse cx="1467.1" cy="624.2" rx="1.9" ry="3.3" fill="#0a5f63" transform="rotate(12 1467.3 626)"/>
<ellipse cx="1469" cy="647" rx="3" ry="5.8" fill="#4aacae" transform="rotate(12 1469 647)"/>
<ellipse cx="1468.8" cy="645.2" rx="1.9" ry="3.3" fill="#0a5f63" transform="rotate(12 1469 647)"/>
<ellipse cx="1441" cy="654.5" rx="3" ry="5.8" fill="#4aacae" transform="rotate(12 1441 654.5)"/>
<ellipse cx="1440.8" cy="652.7" rx="1.9" ry="3.3" fill="#0a5f63" transform="rotate(12 1441 654.5)"/>
<ellipse cx="1442.6" cy="675.1" rx="3" ry="5.8" fill="#4aacae" transform="rotate(12 1442.6 675.1)"/>
<ellipse cx="1442.3999999999999" cy="673.3000000000001" rx="1.9" ry="3.3" fill="#0a5f63" transform="rotate(12 1442.6 675.1)"/>
<ellipse cx="1427.7" cy="668.9" rx="3" ry="5.8" fill="#4aacae" transform="rotate(12 1427.7 668.9)"/>
<ellipse cx="1427.5" cy="667.1" rx="1.9" ry="3.3" fill="#0a5f63" transform="rotate(12 1427.7 668.9)"/>
<ellipse cx="1428.8" cy="690.5" rx="3" ry="5.8" fill="#4aacae" transform="rotate(12 1428.8 690.5)"/>
<ellipse cx="1428.6" cy="688.7" rx="1.9" ry="3.3" fill="#0a5f63" transform="rotate(12 1428.8 690.5)"/>
<ellipse cx="1404.6" cy="692.7" rx="3" ry="5.8" fill="#4aacae" transform="rotate(12 1404.6 692.7)"/>
<ellipse cx="1404.3999999999999" cy="690.9000000000001" rx="1.9" ry="3.3" fill="#0a5f63" transform="rotate(12 1404.6 692.7)"/>
<ellipse cx="1406.4" cy="713.8" rx="3" ry="5.8" fill="#4aacae" transform="rotate(12 1406.4 713.8)"/>
<ellipse cx="1406.2" cy="712.0" rx="1.9" ry="3.3" fill="#0a5f63" transform="rotate(12 1406.4 713.8)"/>
<ellipse cx="1394.1" cy="705" rx="3" ry="5.8" fill="#4aacae" transform="rotate(12 1394.1 705)"/>
<ellipse cx="1393.8999999999999" cy="703.2" rx="1.9" ry="3.3" fill="#0a5f63" transform="rotate(12 1394.1 705)"/>
<ellipse cx="1395.8" cy="724.3" rx="3" ry="5.8" fill="#4aacae" transform="rotate(12 1395.8 724.3)"/>
<ellipse cx="1395.6" cy="722.5" rx="1.9" ry="3.3" fill="#0a5f63" transform="rotate(12 1395.8 724.3)"/>
<ellipse cx="1368.8" cy="732.4" rx="3" ry="5.8" fill="#4aacae" transform="rotate(12 1368.8 732.4)"/>
<ellipse cx="1368.6" cy="730.6" rx="1.9" ry="3.3" fill="#0a5f63" transform="rotate(12 1368.8 732.4)"/>
<ellipse cx="1370.2" cy="752.8" rx="3" ry="5.8" fill="#4aacae" transform="rotate(12 1370.2 752.8)"/>
<ellipse cx="1370.0" cy="751.0" rx="1.9" ry="3.3" fill="#0a5f63" transform="rotate(12 1370.2 752.8)"/>
</g>
<g id="wcs" font-family="Liberation Sans, sans-serif" font-weight="bold">
<line x1="1050" y1="555" x2="934" y2="537" stroke="#d94f3a" stroke-width="1.6"/>
<polygon points="933,536.8 952,534.6 960,541 953,543.6" fill="#e8604a"/>
<polygon points="990,545.6 1006,545 1026,551.5 1010,553.6" fill="#e8604a"/>
<text x="935" y="529.5" font-size="12.5" fill="#9c5a3c" font-weight="normal">XM</text>
<text x="990" y="540" font-size="12.5" fill="#94583c" font-weight="normal">XC</text>
<line x1="1050" y1="556" x2="993" y2="620" stroke="#58c83c" stroke-width="1.8"/>
<polygon points="992.5,621 1004,603 1016,597.5 1011.5,607" fill="#6fdc48"/>
<polygon points="1028,580.5 1034,571 1041.5,566.5 1038,574.5" fill="#6fdc48"/>
<text x="1022" y="605.5" font-size="13.5" fill="#4f9440" font-weight="normal">YC</text>
<text x="995.5" y="638" font-size="14" fill="#40a84a" font-weight="normal">YM</text>
<line x1="1049.5" y1="555" x2="1041" y2="444" stroke="#1247d8" stroke-width="3"/>
<polygon points="1040.3,441.5 1036.8,462 1041.5,468.5 1046,461.5" fill="#1a50e0"/>
<polygon points="1045.5,500 1043,512 1046.5,518 1050,511" fill="#1a50e0"/>
<text x="1046" y="440" font-size="15" fill="#1a66e4">ZM</text>
<text x="1050" y="493" font-size="15" fill="#1a66e4">ZC</text>
</g>
<g id="triad" font-family="Liberation Sans, sans-serif">
<polygon points="545,954 556,946.5 581,950 580,978 568,986 545,981" fill="#858585"/>
<polygon points="545,954 556,946.5 581,950 569,958" fill="#a2a2a2"/>
<polygon points="569,958 581,950 580,978 568,986" fill="#787878"/>
<polygon points="545,954 569,958 568,986 545,981" fill="#8e8e8e"/>
<line x1="543" y1="967" x2="580" y2="973" stroke="#d9a0a0" stroke-width="2"/>
<line x1="582" y1="972" x2="579" y2="936" stroke="#1a3fd0" stroke-width="2.4"/>
<polygon points="578.6,934 575.5,950 582.5,950" fill="#1a3fd0"/>
<line x1="580" y1="976" x2="563" y2="995" stroke="#3fb84a" stroke-width="2.2"/>
<polygon points="561.5,996.5 566,984.5 573,989" fill="#3fb84a"/>
<circle cx="582.4" cy="973.8" r="4.6" fill="#e8e8e8"/>
<text x="573.5" y="935.5" font-size="13" fill="#2a55e0">Z</text>
<text x="531" y="972" font-size="13" fill="#c03a3a">X</text>
<text x="554" y="1005.5" font-size="13" fill="#3fa84a">Y</text>
</g>
</svg>
<style>
.cm{position:absolute;background:#ebebeb;border:1px solid #9c9c9c;box-shadow:3px 3px 3px rgba(0,0,0,0.55);}
.cmi{position:absolute;font-size:15.8px;line-height:18px;white-space:nowrap;color:#111;font-family:"Liberation Sans","Noto Sans CJK SC",sans-serif;}
.cms{position:absolute;height:1px;background:#c6c6c6;border-bottom:1px solid #f8f8f8;box-sizing:content-box;}
</style>
<div class="cm" style="left:64px;top:377px;width:132px;height:551px;"></div>
<div class="abs" style="left:68px;top:669px;width:126px;height:28px;background:linear-gradient(#5298f4,#4890f0 50%,#3f86ea);"></div>
<div class="cmi" style="left:102px;top:384px;font-weight:bold;">编辑...</div>
<div class="cmi" style="left:102px;top:412px;">剪切</div>
<div class="cmi" style="left:102px;top:440.5px;">复制</div>
<div class="cmi" style="left:102px;top:469px;">删除</div>
<div class="cmi" style="left:102px;top:497.5px;">重命名</div>
<div class="cmi" style="left:102px;top:537px;">生成</div>
<div class="cmi" style="left:102px;top:566px;">并行生成</div>
<div class="cmi" style="left:102px;top:594px;">重播</div>
<div class="cmi" style="left:102px;top:633px;">后处理</div>
<div class="cmi" style="left:102px;top:673.5px;color:#fff;">插入</div>
<div class="cmi" style="left:102px;top:713.5px;">对象</div>
<div class="cmi" style="left:102px;top:753px;">刀轨</div>
<div class="cmi" style="left:102px;top:792.5px;">工件</div>
<div class="cmi" style="left:102px;top:832.5px;">工作指导</div>
<div class="cmi" style="left:102px;top:872.5px;">信息</div>
<div class="cmi" style="left:102px;top:901px;">属性</div>
<div class="cms" style="left:80px;top:525px;width:99px;"></div>
<div class="cms" style="left:80px;top:622px;width:99px;"></div>
<div class="cms" style="left:80px;top:662px;width:99px;"></div>
<div class="cms" style="left:80px;top:703px;width:99px;"></div>
<div class="cms" style="left:80px;top:742px;width:99px;"></div>
<div class="cms" style="left:80px;top:782px;width:99px;"></div>
<div class="cms" style="left:80px;top:822px;width:99px;"></div>
<div class="cms" style="left:80px;top:862px;width:99px;"></div>
<div class="cm" style="left:193px;top:669px;width:128px;height:148px;"></div>
<div class="cmi" style="left:231px;top:677.5px;">工序...</div>
<div class="cmi" style="left:231px;top:706px;">程序组...</div>
<div class="cmi" style="left:231px;top:734px;">刀具...</div>
<div class="cmi" style="left:231px;top:762.5px;">几何体...</div>
<div class="cmi" style="left:231px;top:790.5px;">方法...</div>
<svg class="abs" style="left:0;top:0" width="340" height="940" viewBox="0 0 340 940">
<g transform="translate(82.5 393.5)"><rect x="-10.5" y="-9.5" width="6.5" height="13" fill="url(#gdr)" rx="1.2"/><line x1="-10.5" y1="-6.5" x2="-4" y2="-5.3" stroke="#2a3590" stroke-width="0.9"/><line x1="-10.5" y1="-2.5" x2="-4" y2="-1.3" stroke="#2a3590" stroke-width="0.9"/><line x1="-4" y1="-6" x2="7" y2="-6" stroke="#666" stroke-width="1.1"/><line x1="-4" y1="-3.2" x2="4" y2="-3.2" stroke="#666" stroke-width="1.1"/><path d="M-3 9.1 L5.5 1.5" fill="none" stroke="#b09a30" stroke-width="4.2" stroke-linecap="round"/><path d="M-3 9.1 L5.5 1.5" fill="none" stroke="#f0d860" stroke-width="2.9" stroke-linecap="round"/><circle cx="6.8" cy="0.2" r="3.6" fill="#f0d860" stroke="#b09a30" stroke-width="0.9"/><circle cx="8.5" cy="-1.5" r="1.9" fill="#e4e4e4"/></g>
<g transform="translate(82.5 421.5)"><rect x="-10.5" y="-9.5" width="6.5" height="13" fill="url(#gdr)" rx="1.2"/><line x1="-10.5" y1="-6.5" x2="-4" y2="-5.3" stroke="#2a3590" stroke-width="0.9"/><line x1="-10.5" y1="-2.5" x2="-4" y2="-1.3" stroke="#2a3590" stroke-width="0.9"/><line x1="-4" y1="-6" x2="7" y2="-6" stroke="#666" stroke-width="1.1"/><line x1="-4" y1="-3.2" x2="4" y2="-3.2" stroke="#666" stroke-width="1.1"/><path d="M-3 2 L9 -1 M-1 -2 L7 8" fill="none" stroke="#a89830" stroke-width="2.2"/><circle cx="-3" cy="3" r="2" fill="none" stroke="#8a7a20" stroke-width="1.4"/><circle cx="7" cy="8" r="2" fill="none" stroke="#8a7a20" stroke-width="1.4"/></g>
<g transform="translate(82.5 450)"><rect x="-10.5" y="-9.5" width="6.5" height="13" fill="url(#gdr)" rx="1.2"/><line x1="-10.5" y1="-6.5" x2="-4" y2="-5.3" stroke="#2a3590" stroke-width="0.9"/><line x1="-10.5" y1="-2.5" x2="-4" y2="-1.3" stroke="#2a3590" stroke-width="0.9"/><line x1="-4" y1="-6" x2="7" y2="-6" stroke="#666" stroke-width="1.1"/><line x1="-4" y1="-3.2" x2="4" y2="-3.2" stroke="#666" stroke-width="1.1"/><path d="M-2 -1 h6 l3 3 v8 h-9z" fill="#f4f4ff" stroke="#4a55b8" stroke-width="1.1"/><path d="M3 4 h4 l2 2 v4 h-6z" fill="#fff" stroke="#4a55b8" stroke-width="1"/></g>
<g transform="translate(82.5 478.5)"><rect x="-10.5" y="-9.5" width="6.5" height="13" fill="url(#gdr)" rx="1.2"/><line x1="-10.5" y1="-6.5" x2="-4" y2="-5.3" stroke="#2a3590" stroke-width="0.9"/><line x1="-10.5" y1="-2.5" x2="-4" y2="-1.3" stroke="#2a3590" stroke-width="0.9"/><line x1="-4" y1="-6" x2="7" y2="-6" stroke="#666" stroke-width="1.1"/><line x1="-4" y1="-3.2" x2="4" y2="-3.2" stroke="#666" stroke-width="1.1"/><path d="M-2 0 L9 10 M9 0 L-2 10" fill="none" stroke="#1a1a1a" stroke-width="2.2" stroke-linecap="round"/></g>
<g transform="translate(82.5 507)"><rect x="-10.5" y="-9.5" width="6.5" height="13" fill="url(#gdr)" rx="1.2"/><line x1="-10.5" y1="-6.5" x2="-4" y2="-5.3" stroke="#2a3590" stroke-width="0.9"/><line x1="-10.5" y1="-2.5" x2="-4" y2="-1.3" stroke="#2a3590" stroke-width="0.9"/><line x1="-4" y1="-7" x2="7" y2="-7" stroke="#666" stroke-width="1.1"/><line x1="-4" y1="-4.2" x2="4" y2="-4.2" stroke="#666" stroke-width="1.1"/><rect x="-5" y="4" width="15" height="6" fill="#fff" stroke="#2a2a90" stroke-width="1.3"/><path d="M-2 7 h9" fill="none" stroke="#2a2a90" stroke-width="1" stroke-dasharray="2 1"/><path d="M-2 2 l9 -7 l2 2 l-9 7z" fill="#e0a030" stroke="#8a6a10" stroke-width="0.6"/></g>
<g transform="translate(82.5 546.5)"><rect x="-9" y="-10" width="5" height="13" fill="url(#gdr)" rx="1.2"/><line x1="-9" y1="-7" x2="-4" y2="-5.8" stroke="#2a3590" stroke-width="0.9"/><line x1="-9" y1="-3" x2="-4" y2="-1.8" stroke="#2a3590" stroke-width="0.9"/><line x1="-3" y1="-6" x2="9" y2="-6" stroke="#666" stroke-width="1.2"/><line x1="-3" y1="-3" x2="7" y2="-3" stroke="#666" stroke-width="1.2"/><line x1="-3" y1="0" x2="4" y2="0" stroke="#666" stroke-width="1.2"/><path d="M-10 5 l3.5 -1.5 l3.5 1.5 l-3.5 2z" fill="#c8d040"/></g>
<g transform="translate(82.5 575.5)"><rect x="-9" y="-10" width="5" height="13" fill="url(#gdr)" rx="1.2"/><line x1="-9" y1="-7" x2="-4" y2="-5.8" stroke="#2a3590" stroke-width="0.9"/><line x1="-9" y1="-3" x2="-4" y2="-1.8" stroke="#2a3590" stroke-width="0.9"/><line x1="-3" y1="-6" x2="8" y2="-6" stroke="#666" stroke-width="1.1"/><line x1="-3" y1="-3" x2="6" y2="-3" stroke="#666" stroke-width="1.1"/><rect x="-2" y="0" width="12" height="9" fill="url(#gbl)" stroke="#1a2a70" stroke-width="1.3" rx="1.5"/><path d="M-10 5 l3.5 -1.5 l3.5 1.5 l-3.5 2z" fill="#c8d040"/></g>
<g transform="translate(82.5 603.5)"><path d="M-10 -8 h5 v4.5 h-5 v4.5 h5 v4.5 h-5" fill="none" stroke="#333" stroke-width="1.4"/><path d="M-2 6 q2 -6 8 -3" fill="none" stroke="#111" stroke-width="2.2"/><path d="M3 6 l7 1 l-3 -6z" fill="#111"/></g>
<g transform="translate(82.5 642.5)"><rect x="-10" y="-10" width="5" height="9" fill="url(#gdr)" rx="1.2"/><line x1="-10" y1="-7" x2="-5" y2="-5.8" stroke="#2a3590" stroke-width="0.9"/><line x1="-10" y1="-3" x2="-5" y2="-1.8" stroke="#2a3590" stroke-width="0.9"/><path d="M-10 4 q2 4 6 3 l-1 2 l4 -3 l-4 -2 l0 1.5 q-3 0 -4 -2z" fill="#f08030"/><path d="M-2 -3 h5 l4 4 v8 h-4" fill="none" stroke="#555" stroke-width="1.1"/><text x="-1" y="8" font-size="10" fill="#333" font-weight="bold" font-family="Liberation Sans,sans-serif">P</text></g>
<g transform="translate(82.5 882)"><rect x="-10" y="-10" width="5" height="10" fill="url(#gdr)" rx="1.2"/><line x1="-10" y1="-7" x2="-5" y2="-5.8" stroke="#2a3590" stroke-width="0.9"/><line x1="-10" y1="-3" x2="-5" y2="-1.8" stroke="#2a3590" stroke-width="0.9"/><line x1="-4" y1="-6" x2="4" y2="-6" stroke="#666" stroke-width="1.1"/><rect x="-3" y="-2" width="12" height="12" fill="#fff" stroke="#2a2a80" stroke-width="1.3"/><text x="0.5" y="8" font-size="10.5" fill="#000" font-weight="bold" font-family="Liberation Serif,serif">i</text></g>
<g transform="translate(82.5 910.5)"><rect x="-10" y="-10" width="5" height="10" fill="url(#gdr)" rx="1.2"/><line x1="-10" y1="-7" x2="-5" y2="-5.8" stroke="#2a3590" stroke-width="0.9"/><line x1="-10" y1="-3" x2="-5" y2="-1.8" stroke="#2a3590" stroke-width="0.9"/><line x1="-4" y1="-7" x2="6" y2="-7" stroke="#666" stroke-width="1.1"/><rect x="-4" y="-3" width="14" height="13" fill="#e8ecff" stroke="#5a68c0" stroke-width="1.2"/><line x1="-4" y1="1" x2="10" y2="1" stroke="#5a68c0" stroke-width="1"/><path d="M-1 4 h2 v2 h-2z M4 4 h2 v2 h-2z" fill="#4a55b0"/></g>
<path d="M181.5 678 v10 l5.5 -5z" fill="#fff"/>
<path d="M181.5 718 v10 l5.5 -5z" fill="#111"/>
<path d="M181.5 757.5 v10 l5.5 -5z" fill="#111"/>
<path d="M181.5 797 v10 l5.5 -5z" fill="#111"/>
<path d="M181.5 837 v10 l5.5 -5z" fill="#111"/>
<g transform="translate(211 687)"><rect x="-8" y="-5" width="5" height="13" fill="url(#gdr)" rx="1"/><line x1="-2" y1="0" x2="8" y2="0" stroke="#666" stroke-width="1.1"/><line x1="-2" y1="3" x2="6" y2="3" stroke="#666" stroke-width="1.1"/><line x1="-2" y1="6" x2="3" y2="6" stroke="#666" stroke-width="1.1"/><polygon points="4.5,-5 1.3,-4.1 2.9,-1.1 -0.1,-2.7 -1,0.5 -1.9,-2.7 -4.9,-1.1 -3.3,-4.1 -6.5,-5 -3.3,-5.9 -4.9,-8.9 -1.9,-7.3 -1,-10.5 -0.1,-7.3 2.9,-8.9 1.3,-5.9" fill="#f8ec40" stroke="#b4c830" stroke-width="0.8"/><circle cx="-1" cy="-5" r="1.9" fill="#fffbe0"/></g>
<g transform="translate(211 715.5)"><rect x="-9" y="-4" width="8" height="8" fill="#e8ecff" stroke="#5a68b8" stroke-width="1"/><rect x="-4" y="1" width="13" height="9" fill="#e8ecff" stroke="#5a68b8" stroke-width="1"/><path d="M-2 3 h2 v2 h-2z M2 3 h2 v2 h-2z M6 3 h2 v2 h-2z M-2 6.5 h2 v2 h-2z M2 6.5 h2 v2 h-2z" fill="#8a96d8"/><polygon points="9.5,-5 6.3,-4.1 7.9,-1.1 4.9,-2.7 4,0.5 3.1,-2.7 0.1,-1.1 1.7,-4.1 -1.5,-5 1.7,-5.9 0.1,-8.9 3.1,-7.3 4,-10.5 4.9,-7.3 7.9,-8.9 6.3,-5.9" fill="#f8ec40" stroke="#b4c830" stroke-width="0.8"/><circle cx="4" cy="-5" r="1.9" fill="#fffbe0"/></g>
<g transform="translate(211 743.5)"><path d="M-9 -1 h5 v9 l-2.5 2.5 l-2.5 -2.5z" fill="url(#gdr)" stroke="#2a3590" stroke-width="0.7"/><rect x="3" y="-9" width="6" height="9" fill="#444" stroke="#222" stroke-width="0.6"/><rect x="2" y="-1" width="6" height="6" fill="#e8a030" stroke="#8a5a10" stroke-width="0.8"/><polygon points="2,-5 -0.9,-4.1 0.5,-1.5 -2.1,-2.9 -3,0 -3.9,-2.9 -6.5,-1.5 -5.1,-4.1 -8,-5 -5.1,-5.9 -6.5,-8.5 -3.9,-7.1 -3,-10 -2.1,-7.1 0.5,-8.5 -0.9,-5.9" fill="#f8ec40" stroke="#b4c830" stroke-width="0.8"/><circle cx="-3" cy="-5" r="1.8" fill="#fffbe0"/></g>
<g transform="translate(211 772)"><path d="M-3 -4 l8 -2 l4 3 v10 l-8 2 l-4 -3z" fill="url(#gbl)" stroke="#3a55b8" stroke-width="0.9"/><circle cx="-6" cy="6" r="3.6" fill="#f0a030" stroke="#b06a10" stroke-width="0.8"/><circle cx="-2" cy="3" r="3" fill="#f06a40" stroke="#b04010" stroke-width="0.8"/><polygon points="1,-5 -1.9,-4.1 -0.5,-1.5 -3.1,-2.9 -4,0 -4.9,-2.9 -7.5,-1.5 -6.1,-4.1 -9,-5 -6.1,-5.9 -7.5,-8.5 -4.9,-7.1 -4,-10 -3.1,-7.1 -0.5,-8.5 -1.9,-5.9" fill="#f8ec40" stroke="#b4c830" stroke-width="0.8"/><circle cx="-4" cy="-5" r="1.8" fill="#fffbe0"/></g>
<g transform="translate(211 800)"><rect x="-9" y="-1" width="18" height="11" fill="#dff0ff" stroke="#3a6ab0" stroke-width="1.2"/><path d="M-9 -1 q2.2 4 4.5 0 q2.2 4 4.5 0 q2.2 4 4.5 0 q2.2 4 4.5 0" fill="none" stroke="#3a6ab0" stroke-width="1"/><path d="M-8 5 q2 -2.5 4 0 q2 2.5 4 0 q2 -2.5 4 0 q2 2.5 4 0" fill="none" stroke="#3a6ab0" stroke-width="1"/><polygon points="2,-6 -0.9,-5.1 0.5,-2.5 -2.1,-3.9 -3,-1 -3.9,-3.9 -6.5,-2.5 -5.1,-5.1 -8,-6 -5.1,-6.9 -6.5,-9.5 -3.9,-8.1 -3,-11 -2.1,-8.1 0.5,-9.5 -0.9,-6.9" fill="#f8ec40" stroke="#b4c830" stroke-width="0.8"/><circle cx="-3" cy="-6" r="1.8" fill="#fffbe0"/></g>
<path d="M142.5 678.5 v19 l4.5 -4 l3.5 8 l3 -1.3 l-3.5 -8 h6z" fill="#fff" stroke="#111" stroke-width="1.2"/>
</svg>
</body>
</html>
